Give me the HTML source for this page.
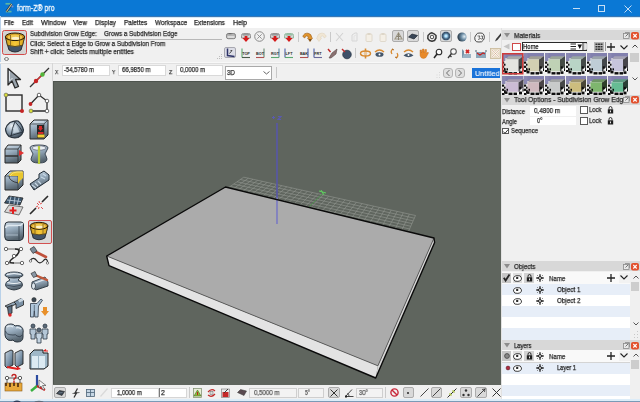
<!DOCTYPE html>
<html><head><meta charset="utf-8">
<style>
*{margin:0;padding:0;box-sizing:border-box}
html,body{width:640px;height:402px;overflow:hidden;background:#f0f0f0;font-family:"Liberation Sans",sans-serif;color:#000}
.a{position:absolute}
svg{position:absolute;overflow:visible}
.t{position:absolute;white-space:nowrap;line-height:0;transform-origin:0 0;color:#1a1a1a;-webkit-text-stroke:0.25px currentColor;will-change:transform}
</style></head><body>
<div class="a" style="left:0px;top:0px;width:640px;height:16px;background:#0a78d5"></div>
<div class="t" style="left:17.00px;top:7.85px;font-size:8.8px;transform:scaleX(0.789);color:#eef6fd;-webkit-text-stroke:0.35px #eef6fd">form-Z® pro</div>
<div class="a" style="left:0px;top:16px;width:640px;height:1px;background:#3a78b4"></div>
<svg style="left:4px;top:2px" width="11" height="12" viewBox="0 0 11 12"><path d="M1.5 1.8L7 1.8" stroke="#5cb4a4" stroke-width="1.7"/><path d="M1.8 9.6L7.5 9.6" stroke="#5cb4a4" stroke-width="1.7"/><path d="M2.5 9.5L7.8 2" stroke="#1a3050" stroke-width="2.2"/><path d="M2.5 9.5L7.8 2" stroke="#d0c890" stroke-width="1.1"/><circle cx="8.5" cy="4.5" r="1" fill="#8a90c8"/></svg>
<div class="a" style="left:573px;top:8px;width:7px;height:1px;background:#c6def4"></div>
<div class="a" style="left:598px;top:5px;width:7px;height:7px;border:1px solid #c6def4"></div>
<svg style="left:623.5px;top:4.5px" width="8" height="8" viewBox="0 0 8 8"><path d="M0.5 0.5L7.5 7.5M7.5 0.5L0.5 7.5" stroke="#d6e8f8" stroke-width="0.9"/></svg>
<div class="a" style="left:0px;top:17px;width:640px;height:11px;background:#ffffff"></div>
<div class="a" style="left:0px;top:17px;width:640px;height:1px;background:#d2e8f8"></div>
<div class="t" style="left:4.00px;top:22.67px;font-size:7.3px;transform:scaleX(0.850);color:#1e1e1e">File</div>
<div class="t" style="left:22.00px;top:22.67px;font-size:7.3px;transform:scaleX(0.874);color:#1e1e1e">Edit</div>
<div class="t" style="left:41.00px;top:22.67px;font-size:7.3px;transform:scaleX(0.963);color:#1e1e1e">Window</div>
<div class="t" style="left:73.00px;top:22.67px;font-size:7.3px;transform:scaleX(0.892);color:#1e1e1e">View</div>
<div class="t" style="left:95.00px;top:22.67px;font-size:7.3px;transform:scaleX(0.877);color:#1e1e1e">Display</div>
<div class="t" style="left:123.60px;top:22.67px;font-size:7.3px;transform:scaleX(0.880);color:#1e1e1e">Palettes</div>
<div class="t" style="left:154.50px;top:22.67px;font-size:7.3px;transform:scaleX(0.888);color:#1e1e1e">Workspace</div>
<div class="t" style="left:194.30px;top:22.67px;font-size:7.3px;transform:scaleX(0.865);color:#1e1e1e">Extensions</div>
<div class="t" style="left:233.00px;top:22.67px;font-size:7.3px;transform:scaleX(0.932);color:#1e1e1e">Help</div>
<div class="a" style="left:0px;top:16px;width:1px;height:384px;background:#b9d1e9"></div>
<div class="a" style="left:30px;top:39px;width:192px;height:1px;background:#b8b8b8"></div>
<div class="t" style="left:30.00px;top:33.81px;font-size:7.2px;transform:scaleX(0.872);color:#262626">Subdivision Grow Edge:</div>
<div class="t" style="left:104.40px;top:33.81px;font-size:7.2px;transform:scaleX(0.872);color:#262626">Grows a Subdivision Edge</div>
<div class="t" style="left:30.00px;top:44.01px;font-size:7.2px;transform:scaleX(0.873);color:#262626">Click: Select a Edge to Grow a Subdivision From</div>
<div class="t" style="left:30.00px;top:52.01px;font-size:7.2px;transform:scaleX(0.898);color:#262626">Shift + click: Selects multiple entities</div>
<div class="a" style="left:1.7px;top:30.1px;width:25.8px;height:25.4px;background:#d4d4d4;border:1.3px solid #d24a4a;border-radius:2.5px"></div>
<svg style="left:4px;top:32px" width="22" height="22" viewBox="0 0 22 22"><path d="M1.5 5L20.5 5L18.5 13L17 18Q11 22 5 18L3.5 13Z" fill="#445468" stroke="#1e2228" stroke-width="0.9"/><path d="M1.5 5L20.5 5L18.6 13.2Q11 15.8 3.4 13.2Z" fill="url(#gy)" stroke="#3a2a10" stroke-width="0.7"/><ellipse cx="11" cy="4.8" rx="9.6" ry="3.8" fill="#c99420" stroke="#241a08" stroke-width="1"/><ellipse cx="11" cy="5.3" rx="7.4" ry="2.7" fill="#f0c850"/><ellipse cx="11.5" cy="6.2" rx="4" ry="1.5" fill="#fbf0cc"/><path d="M6.5 3L6.5 13.5M15.5 3L15.5 13.5" stroke="#6a5020" stroke-width="0.7"/></svg>
<svg style="left:3.5px;top:56.5px" width="5" height="4" viewBox="0 0 5 4"><ellipse cx="2.5" cy="2" rx="2" ry="1.4" fill="#fff" stroke="#666" stroke-width="0.9"/></svg>
<svg style="left:217px;top:54px" width="6" height="6" viewBox="0 0 6 6"><g fill="#bdbdbd"><rect x="4" y="0" width="1" height="1"/><rect x="4" y="2" width="1" height="1"/><rect x="4" y="4" width="1" height="1"/><rect x="2" y="2" width="1" height="1"/><rect x="2" y="4" width="1" height="1"/><rect x="0" y="4" width="1" height="1"/></g></svg>
<svg style="left:226.2px;top:32.8px" width="10" height="6" viewBox="0 0 10 6"><rect x="0.5" y="0.5" width="9" height="5.2" rx="1.8" fill="#b4b4b4" stroke="#7a7a7a" stroke-width="0.9"/><rect x="1.5" y="3" width="7" height="2" fill="#dcdcdc"/><rect x="2.5" y="0" width="3" height="1.2" fill="#6a6a6a"/></svg>
<svg style="left:240.5px;top:32.5px" width="10" height="9" viewBox="0 0 10 9"><path d="M0.5 5L0.5 2.5Q0.5 0.5 2.5 0.5L7.5 0.5Q9.5 0.5 9.5 2.5L9.5 5Z" fill="#d8d8d8" stroke="#8a8a8a" stroke-width="0.9"/><rect x="1.5" y="1.2" width="7" height="1.3" fill="#8a8a8a"/><path d="M3.6 3L6.4 3L6.4 5L8.6 5L5 9L1.4 5L3.6 5Z" fill="#d41a1a"/></svg>
<svg style="left:254.0px;top:31.0px" width="11" height="11" viewBox="0 0 11 11"><circle cx="5.5" cy="5.5" r="4.8" fill="none" stroke="#8a8a8a" stroke-width="1"/><path d="M3.3 3.3L7.7 7.7M7.7 3.3L3.3 7.7" stroke="#8a8a8a" stroke-width="0.9"/></svg>
<svg style="left:269.5px;top:32.5px" width="10" height="9" viewBox="0 0 10 9"><path d="M0.5 5L0.5 2.5Q0.5 0.5 2.5 0.5L7.5 0.5Q9.5 0.5 9.5 2.5L9.5 5Z" fill="#d8d8d8" stroke="#8a8a8a" stroke-width="0.9"/><rect x="1.5" y="1.2" width="7" height="1.3" fill="#8a8a8a"/><path d="M3.6 3L6.4 3L6.4 5L8.6 5L5 9L1.4 5L3.6 5Z" fill="#d41a1a"/></svg>
<svg style="left:283.5px;top:32.5px" width="10" height="9" viewBox="0 0 10 9"><path d="M0.5 5L0.5 2.5Q0.5 0.5 2.5 0.5L7.5 0.5Q9.5 0.5 9.5 2.5L9.5 5Z" fill="#d8d8d8" stroke="#8ab89a" stroke-width="0.9"/><rect x="1.5" y="1.2" width="7" height="1.3" fill="#8ab89a"/><path d="M3.6 3L6.4 3L6.4 5L8.6 5L5 9L1.4 5L3.6 5Z" fill="#d41a1a"/></svg>
<div class="a" style="left:298px;top:32px;width:1px;height:10px;background:#c9c9c9"></div>
<svg style="left:302.0px;top:32.0px" width="11" height="10" viewBox="0 0 11 10"><path d="M0.8 4.5Q2 0.8 6 1.2Q9.5 1.8 9.8 5.5L10.5 6L8 9.5L5.5 6L6.5 5.5Q6.2 3.8 4.5 4Q3 4.3 2.8 6Z" fill="#e0942c" stroke="#9a5a18" stroke-width="0.6"/><path d="M7 7L8 9.5L9.5 7.5" fill="#5a3a18"/></svg>
<svg style="left:316.0px;top:32.0px" width="11" height="10" viewBox="0 0 11 10"><path d="M10.2 4.5Q9 0.8 5 1.2Q1.5 1.8 1.2 5.5L0.5 6L3 9.5L5.5 6L4.5 5.5Q4.8 3.8 6.5 4Q8 4.3 8.2 6Z" fill="#f0e6d4" stroke="#e0d4bc" stroke-width="0.6"/></svg>
<div class="a" style="left:330px;top:32px;width:1px;height:10px;background:#c9c9c9"></div>
<svg style="left:334.5px;top:32.0px" width="9" height="10" viewBox="0 0 9 10"><path d="M1 1L8 9M8 1L1 9" stroke="#d2d2d2" stroke-width="1.1"/></svg>
<svg style="left:349.5px;top:32.0px" width="9" height="10" viewBox="0 0 9 10"><path d="M2 9L2 3L5 1L7 1L7 9Z" fill="none" stroke="#d6d6d6" stroke-width="1"/><path d="M4 9L4 4L6 3" fill="none" stroke="#dedede" stroke-width="0.8"/></svg>
<svg style="left:365.0px;top:32.0px" width="8" height="10" viewBox="0 0 8 10"><rect x="1" y="2" width="6" height="7.5" rx="1" fill="#f4efe6" stroke="#ddd6c8" stroke-width="0.9"/><rect x="2.5" y="1" width="3" height="2" fill="#ddd6c8"/></svg>
<svg style="left:379.0px;top:32.0px" width="8" height="10" viewBox="0 0 8 10"><rect x="1" y="2" width="6" height="7.5" rx="1" fill="#f4efe6" stroke="#ddd6c8" stroke-width="0.9"/><rect x="2.5" y="1" width="3" height="2" fill="#ddd6c8"/></svg>
<div class="a" style="left:392px;top:30px;width:12px;height:12px;background:#d9d9d9;border:1px solid #acacac;border-radius:2px"></div>
<div class="a" style="left:407px;top:30px;width:12px;height:12px;background:#d9d9d9;border:1px solid #acacac;border-radius:2px"></div>
<svg style="left:408.0px;top:32.5px" width="10" height="7" viewBox="0 0 10 7"><path d="M0.5 4L4 1L9.5 2.5L6 6Z" fill="#3a4656" stroke="#1e2630" stroke-width="0.7"/></svg>
<div class="a" style="left:423px;top:32px;width:1px;height:10px;background:#c9c9c9"></div>
<svg style="left:427.0px;top:32.0px" width="10" height="10" viewBox="0 0 10 10"><path d="M5 0.8L7 1.8L9 3.5L9 6L7.5 8.5L5 9.2L2.5 8.5L0.8 6.5L1 3.5L3 1.5Z" fill="#f4f4f4" stroke="#3a3a3a" stroke-width="1.5" stroke-linejoin="round"/><circle cx="5" cy="5" r="1.8" fill="none" stroke="#4a4a4a" stroke-width="1"/></svg>
<svg style="left:393.5px;top:31.5px" width="9" height="9" viewBox="0 0 9 9"><path d="M1 7L4.5 1L8 7Z" fill="none" stroke="#a09a88" stroke-width="1.2"/><path d="M2.5 4.5L6.5 4.5M4.5 1L4.5 8" stroke="#8a8474" stroke-width="1"/></svg>
<div class="a" style="left:440px;top:30px;width:12px;height:12px;background:#d9d9d9;border:1px solid #acacac;border-radius:2px"></div>
<svg width="0" height="0" style="position:absolute"><defs><radialGradient id="gl" cx="0.5" cy="0.5" r="0.5"><stop offset="0" stop-color="#f0faff"/><stop offset="0.3" stop-color="#9ad0f0"/><stop offset="0.6" stop-color="#4a6c88"/><stop offset="0.85" stop-color="#3a5068"/><stop offset="1" stop-color="#8aa4b8"/></radialGradient><radialGradient id="gsh" cx="0.75" cy="0.45" r="0.7"><stop offset="0" stop-color="#e0eef6"/><stop offset="0.5" stop-color="#6a8aa2"/><stop offset="1" stop-color="#2e3e4c"/></radialGradient></defs></svg>
<svg style="left:441.0px;top:31.0px" width="10" height="10" viewBox="0 0 10 10"><circle cx="5" cy="5" r="4.6" fill="url(#gl)"/></svg>
<svg style="left:456.5px;top:31.5px" width="10" height="10" viewBox="0 0 10 10"><circle cx="5" cy="5" r="4.6" fill="url(#gsh)"/></svg>
<div class="a" style="left:470px;top:32px;width:1px;height:10px;background:#c9c9c9"></div>
<svg style="left:473.5px;top:31.5px" width="11" height="11" viewBox="0 0 11 11"><path d="M2 3Q3 0.5 6 1Q9 0.5 10 3Q11 6 9.5 8Q8 10.5 5 10Q2 10.5 1 8Q0 5 2 3Z" fill="#f4f4f4" stroke="#4a4a4a" stroke-width="1"/><path d="M3.5 4L6 4L5 5.5L6.5 6.5L4 7.5M7 4L8.5 4L8.5 7L7 7" fill="none" stroke="#505050" stroke-width="0.8"/></svg>
<div class="a" style="left:489px;top:32px;width:1px;height:10px;background:#c9c9c9"></div>
<svg style="left:494.0px;top:32.0px" width="8" height="10" viewBox="0 0 8 10"><path d="M7 1L2 7L1 9.5L3.5 8L8 2.5Z" fill="#3a3a3a"/></svg>
<div class="a" style="left:224px;top:47px;width:12px;height:11px;background:#dcdde6;border:1px solid #a8a8b0;border-radius:2px"></div>
<svg style="left:225.5px;top:48.0px" width="9" height="9" viewBox="0 0 9 9"><path d="M1.5 0.5L1.5 7.5L8.5 8.5" fill="none" stroke="#2e3468" stroke-width="1.5"/><path d="M3.5 5.5L6 2.5M4.5 2.5L6 2.5" stroke="#3a3a3a" stroke-width="0.9"/></svg>
<svg style="left:240.5px;top:48.0px" width="10" height="10" viewBox="0 0 10 10"><path d="M1 0.5L1 9.5" stroke="#5aa870" stroke-width="1.1"/><path d="M1 9.5L9 9.5" stroke="#4a5a4a" stroke-width="1.1"/><text x="5" y="6.3" font-size="3.8" font-family="Liberation Sans" font-weight="bold" text-anchor="middle" fill="#2a2a2a" transform="scale(1,1.1)">TOP</text></svg>
<svg style="left:255.0px;top:48.0px" width="10" height="10" viewBox="0 0 10 10"><path d="M9 0.5L9 9.5" stroke="#6a8a70" stroke-width="1.1"/><path d="M1 9.5L9 9.5" stroke="#b05050" stroke-width="1.1"/><text x="5" y="6.3" font-size="3.8" font-family="Liberation Sans" font-weight="bold" text-anchor="middle" fill="#2a2a2a" transform="scale(1,1.1)">BOT</text></svg>
<svg style="left:269.5px;top:48.0px" width="10" height="10" viewBox="0 0 10 10"><path d="M9 0.5L9 9.5" stroke="#5a8aa0" stroke-width="1.1"/><path d="M1 9.5L9 9.5" stroke="#5aa870" stroke-width="1.1"/><text x="5" y="6.3" font-size="3.8" font-family="Liberation Sans" font-weight="bold" text-anchor="middle" fill="#2a2a2a" transform="scale(1,1.1)">RGT</text></svg>
<svg style="left:284.0px;top:48.0px" width="10" height="10" viewBox="0 0 10 10"><path d="M1 0.5L1 9.5" stroke="#4a5ea8" stroke-width="1.1"/><path d="M1 9.5L9 9.5" stroke="#5aa870" stroke-width="1.1"/><text x="5" y="6.3" font-size="3.8" font-family="Liberation Sans" font-weight="bold" text-anchor="middle" fill="#2a2a2a" transform="scale(1,1.1)">LFT</text></svg>
<svg style="left:298.5px;top:48.0px" width="10" height="10" viewBox="0 0 10 10"><path d="M9 0.5L9 9.5" stroke="#4a5ea8" stroke-width="1.1"/><path d="M1 9.5L9 9.5" stroke="#b05050" stroke-width="1.1"/><text x="5" y="6.3" font-size="3.8" font-family="Liberation Sans" font-weight="bold" text-anchor="middle" fill="#2a2a2a" transform="scale(1,1.1)">BAK</text></svg>
<svg style="left:313.0px;top:48.0px" width="10" height="10" viewBox="0 0 10 10"><path d="M1 0.5L1 9.5" stroke="#4a5ea8" stroke-width="1.1"/><path d="M1 9.5L9 9.5" stroke="#6a6a9a" stroke-width="1.1"/><text x="5" y="6.3" font-size="3.8" font-family="Liberation Sans" font-weight="bold" text-anchor="middle" fill="#2a2a2a" transform="scale(1,1.1)">FRT</text></svg>
<svg style="left:327.0px;top:47.5px" width="11" height="11" viewBox="0 0 11 11"><path d="M2 10L5 5L10 1L9 6L4 10Z" fill="#8a7070" stroke="#5a4a4a" stroke-width="0.6"/><path d="M1 1L3.5 4" stroke="#c02a2a" stroke-width="1.4"/></svg>
<svg style="left:341.0px;top:47.5px" width="11" height="11" viewBox="0 0 11 11"><circle cx="6" cy="6.5" r="4.3" fill="#3e5068" stroke="#243040" stroke-width="0.7"/><path d="M1 1L4 4" stroke="#c02a2a" stroke-width="1.4"/></svg>
<div class="a" style="left:355px;top:48px;width:1px;height:10px;background:#c9c9c9"></div>
<svg style="left:360.0px;top:47.5px" width="11" height="11" viewBox="0 0 11 11"><ellipse cx="5.5" cy="5.5" rx="5" ry="2.5" fill="none" stroke="#d88a30" stroke-width="1.4"/><path d="M5.5 0.5L5.5 10.5" stroke="#d88a30" stroke-width="1.6"/><circle cx="5.5" cy="5.5" r="1.8" fill="#e8c8a0"/></svg>
<svg style="left:374.0px;top:47.5px" width="11" height="11" viewBox="0 0 11 11"><path d="M1 4Q5.5 0 10 4" fill="none" stroke="#d88a30" stroke-width="1.4"/><ellipse cx="5.5" cy="6.5" rx="4" ry="2.3" fill="#44566a"/><circle cx="5.5" cy="6.5" r="1" fill="#fff"/></svg>
<svg style="left:390.0px;top:47.5px" width="9" height="11" viewBox="0 0 9 11"><path d="M3 1Q0 3 2 6M6 10Q9 8 7 5" fill="none" stroke="#d88a30" stroke-width="1.3"/><path d="M4 2L2 1M5 9L7 10" stroke="#a86a2a" stroke-width="1"/></svg>
<svg style="left:402.5px;top:47.5px" width="11" height="11" viewBox="0 0 11 11"><path d="M1 4Q5.5 0 10 4" fill="none" stroke="#d88a30" stroke-width="1.4"/><path d="M0.5 7.5Q5.5 3 10.5 7.5Q5.5 11 0.5 7.5Z" fill="#44566a"/><circle cx="5.5" cy="7" r="1" fill="#fff"/></svg>
<svg style="left:417.5px;top:47.5px" width="11" height="11" viewBox="0 0 11 11"><path d="M2 5L2 2L3.5 2L3.5 5L4.5 1L6 1L6 5L7 1.5L8.5 1.5L8.5 5.5L10 4L10.5 5L8 9.5Q6 11 3.5 10Q1.5 8.5 2 5Z" fill="#e88a2a" stroke="#c06a1a" stroke-width="0.4"/></svg>
<svg style="left:432.5px;top:47.5px" width="10" height="11" viewBox="0 0 10 11"><circle cx="6" cy="4" r="2.8" fill="#fafafa" stroke="#2a2a2a" stroke-width="1.1"/><path d="M4 6L1 10" stroke="#2a2a2a" stroke-width="1.5"/></svg>
<svg style="left:446.5px;top:47.5px" width="10" height="11" viewBox="0 0 10 11"><circle cx="6.5" cy="3.5" r="2.8" fill="#fafafa" stroke="#555" stroke-width="1.1"/><path d="M4.5 5.5L1 10M3 7.5L4.5 9" stroke="#3a3a3a" stroke-width="1.3"/></svg>
<svg style="left:460.5px;top:47.5px" width="11" height="11" viewBox="0 0 11 11"><path d="M1 10L1 1L3 3L3 6L7 6L10 10Z" fill="#7894a8"/><path d="M1 10L10 10L10 6L3 6" fill="#9ab2c4"/><path d="M5 2L8 5M8 2L5 5" stroke="#d02a2a" stroke-width="1.8"/></svg>
<svg style="left:474.5px;top:47.5px" width="12" height="11" viewBox="0 0 12 11"><path d="M1 4L11 4L11 10L1 10Z" fill="#8aa6ba"/><path d="M2 5L5 7L8 5L10 6" fill="none" stroke="#c42020" stroke-width="1.2"/><path d="M1 4L1 2M11 4L11 2" stroke="#4a6070" stroke-width="1"/></svg>
<svg style="left:489.5px;top:47.5px" width="11" height="11" viewBox="0 0 11 11"><rect x="0.5" y="0.5" width="10" height="10" fill="#e8dcc8" stroke="#c8b898" stroke-width="0.8"/><path d="M2 2L9 9M9 2L2 9" stroke="#fff" stroke-width="1.6"/><path d="M2 2L9 9M9 2L2 9" stroke="#d0a080" stroke-width="0.6"/></svg>
<div class="a" style="left:0px;top:63px;width:500px;height:1px;background:#e0e0e0"></div>
<div class="a" style="left:0px;top:62px;width:500px;height:1px;background:#f8f8f8"></div>
<div class="a" style="left:52px;top:63px;width:1px;height:337px;background:#d6d6d6"></div>
<svg width="0" height="0" style="position:absolute"><defs>
<linearGradient id="gm" x1="0" y1="0" x2="0.3" y2="1"><stop offset="0" stop-color="#d0dce6"/><stop offset="0.45" stop-color="#98acbe"/><stop offset="1" stop-color="#56646f"/></linearGradient>
<linearGradient id="gm2" x1="0" y1="0" x2="1" y2="1"><stop offset="0" stop-color="#c9d6e2"/><stop offset="0.6" stop-color="#7890a6"/><stop offset="1" stop-color="#44535f"/></linearGradient>
<radialGradient id="gs" cx="0.35" cy="0.3" r="0.75"><stop offset="0" stop-color="#eef4f8"/><stop offset="0.45" stop-color="#9aacbc"/><stop offset="1" stop-color="#3c4a58"/></radialGradient>
<linearGradient id="gy" x1="0" y1="0" x2="1" y2="0"><stop offset="0" stop-color="#c99a1a"/><stop offset="0.5" stop-color="#f7c83a"/><stop offset="1" stop-color="#d9a520"/></linearGradient>
</defs></svg>
<svg style="left:4px;top:67.5px" width="20" height="20" viewBox="0 0 20 20"><path d="M4 0.5L4 17L8 13L11 20L14.5 18.5L11.5 11.5L16.5 11.5Z" fill="#9aa4ad" stroke="#2a2a2a" stroke-width="1.3" stroke-linejoin="round"/><path d="M5.5 3L5.5 13L8.5 10" fill="none" stroke="#dfe5ea" stroke-width="1"/></svg>
<svg style="left:29px;top:67.5px" width="20" height="20" viewBox="0 0 20 20"><path d="M1 19L20 0" stroke="#333" stroke-width="1.3"/><path d="M5 15L15 5" stroke="#d23030" stroke-width="1.3"/><circle cx="7" cy="13" r="2.2" fill="#c42424"/><circle cx="13.5" cy="6.5" r="2.2" fill="#52b43a"/></svg>
<svg style="left:4px;top:92.5px" width="20" height="20" viewBox="0 0 20 20"><rect x="2" y="2" width="16" height="16" fill="none" stroke="#2b2b2b" stroke-width="1.4"/><circle cx="2" cy="2" r="1.9" fill="#d8dc3a" stroke="#555" stroke-width="0.6"/><circle cx="18" cy="18" r="2" fill="#c42424"/></svg>
<svg style="left:29px;top:92.5px" width="20" height="20" viewBox="0 0 20 20"><path d="M1.5 11L10 2L18 8L18 18L2 18" fill="none" stroke="#2b2b2b" stroke-width="1.3"/><circle cx="1.5" cy="11" r="1.9" fill="#c42424"/><circle cx="10" cy="2" r="1.8" fill="#fff" stroke="#444" stroke-width="0.8"/><circle cx="18" cy="8" r="1.8" fill="#fff" stroke="#444" stroke-width="0.8"/><circle cx="18" cy="18" r="1.8" fill="#fff" stroke="#444" stroke-width="0.8"/><circle cx="2" cy="18" r="1.9" fill="#d8dc3a" stroke="#555" stroke-width="0.6"/></svg>
<svg style="left:4px;top:118.5px" width="20" height="20" viewBox="0 0 20 20"><path d="M6 3.5Q10 1.5 14 2Q18 5 19.5 11Q19 16 14 18.5Q9 19.5 5 17.5Q1.5 14 1.5 10Q2.5 6 6 3.5Z" fill="url(#gs)" stroke="#26303a" stroke-width="1.1"/><path d="M11 2.5Q8 9 7 17.5M11 2.5Q16 8 19 13.5M5.5 17Q12 15 19 13" fill="none" stroke="#26303a" stroke-width="0.9"/><path d="M11.5 5Q14 9 15.5 13Q11 14 9 14Q10 9 11.5 5Z" fill="#d6e2ec" opacity="0.7"/></svg>
<svg style="left:29px;top:118.5px" width="20" height="20" viewBox="0 0 20 20"><path d="M1 5L5 1L19 1L19 16L15 20L1 20Z" fill="url(#gm)" stroke="#2a2a2a" stroke-width="1"/><path d="M1 5L15 5L19 1M15 5L15 20" fill="none" stroke="#3a3a3a" stroke-width="0.7"/><path d="M5 3L15 3" stroke="#e0e8f0" stroke-width="1"/><rect x="8" y="6" width="7" height="13" fill="#262626"/><path d="M10 7L13 7L13 9L14 9L11.5 12L9 9L10 9Z" fill="#d42a2a"/><rect x="9" y="13" width="5.5" height="2" fill="#d42a2a"/><rect x="8.5" y="15.5" width="7" height="3" fill="#f2d03a"/></svg>
<svg style="left:4px;top:144px" width="20" height="20" viewBox="0 0 20 20"><path d="M1 5L4 1L17 1L17 16L14 19L1 19Z" fill="url(#gm)" stroke="#2a2a2a" stroke-width="1"/><path d="M1 5L14 5L17 1M14 5L14 19" fill="none" stroke="#2a2a2a" stroke-width="0.8"/><path d="M1 12L14 12" stroke="#333" stroke-width="1.5"/><path d="M15 6L20 9L15 12Z" fill="#e03030"/></svg>
<svg style="left:29px;top:144px" width="20" height="20" viewBox="0 0 20 20"><path d="M1 4Q1 1 10 1Q19 1 19 4L17 8Q15 10 17 12L18 15Q18 19 10 19Q2 19 2 15L3 12Q5 10 3 8Z" fill="url(#gm)" stroke="#2e3a46" stroke-width="0.9"/><ellipse cx="10" cy="4" rx="7" ry="2.2" fill="#e8eef4" stroke="#556" stroke-width="0.6"/><path d="M10 2L10 20" stroke="#b8cc3a" stroke-width="2.2"/></svg>
<svg style="left:4px;top:169.5px" width="20" height="20" viewBox="0 0 20 20"><path d="M1 6L6 1L19 1L19 15L14 20L1 20Z" fill="url(#gm)" stroke="#2a2a2a" stroke-width="1"/><path d="M1 6L14 6L19 1M14 6L14 20" fill="none" stroke="#2e3640" stroke-width="0.7"/><path d="M5 6Q6 1.5 11 1.5L19 1.5L19 8Q15 11 14 14L14 6Z" fill="#e8c62e"/><path d="M6 6Q8 2 13 2L18.5 2" fill="none" stroke="#f6e27a" stroke-width="1"/><path d="M5 6Q5 11 14 13" fill="none" stroke="#2a2a2a" stroke-width="0.8"/></svg>
<svg style="left:29px;top:169.5px" width="20" height="20" viewBox="0 0 20 20"><path d="M1 14L10 8L10 4L15 1L20 5L20 10L5 20Z" fill="url(#gm)" stroke="#1f2a35" stroke-width="1"/><path d="M3 15L7 18M6 13L9 16M9 11L12 14M12 7L16 9M14 4L17 6" stroke="#c8d8e6" stroke-width="1.2"/></svg>
<svg style="left:4px;top:194.6px" width="20" height="20" viewBox="0 0 20 20"><path d="M0.5 17L5 10L19 12L15 20Z" fill="#d6d6d6" stroke="#555" stroke-width="0.8"/><path d="M9 12L9 19M5.5 15.5L12.5 15.5" stroke="#e02020" stroke-width="2"/><path d="M0.5 8L5 1L19 3L16 10Z" fill="#3c566e" stroke="#222" stroke-width="0.8"/><path d="M3 5L17 6.5M7 1.5L5 9M11 2L10 9.5M15 2.5L13 10" stroke="#b9cad8" stroke-width="0.9"/></svg>
<svg style="left:29px;top:194.6px" width="20" height="20" viewBox="0 0 20 20"><path d="M1 19L7 13M13 7L19 1" stroke="#2a2a2a" stroke-width="1.6"/><path d="M8 8L10 10M12 12L14 14M7 12L9 11M11 9L13 8M10 6L10.5 8M9.5 14L10 12" stroke="#e04040" stroke-width="0.9"/></svg>
<svg style="left:4px;top:220.8px" width="20" height="20" viewBox="0 0 20 20"><path d="M4 1L17 1Q19.5 1 19.5 4L19.5 15Q19.5 19 16 19.5L4 19.5Q1 19.5 0.8 16L0.8 5Q0.8 1 4 1Z" fill="url(#gm)" stroke="#262e36" stroke-width="1"/><path d="M1.5 7Q2 4.5 5 4.5L15 4.5Q18 4.5 18.5 2" fill="none" stroke="#dfe8f0" stroke-width="1.3"/><path d="M15 5L15 19" stroke="#34404c" stroke-width="0.8"/><path d="M2 14L14 14" stroke="#b8c8d6" stroke-width="0.8"/></svg>
<div class="a" style="left:27.5px;top:219.5px;width:24px;height:24px;background:#d9d9d9;border:1px solid #d35050;border-radius:2px"></div>
<svg style="left:29px;top:220.8px" width="20" height="20" viewBox="0 0 20 20"><path d="M1.2 5L18.8 5L17 12.5L15.8 17Q10 20.5 4.2 17L3 12.5Z" fill="#445468" stroke="#1e2228" stroke-width="0.9"/><path d="M1.2 5L18.8 5L17.1 12.7Q10 15 2.9 12.7Z" fill="url(#gy)" stroke="#3a2a10" stroke-width="0.7"/><ellipse cx="10" cy="4.8" rx="8.9" ry="3.5" fill="#c99420" stroke="#241a08" stroke-width="1"/><ellipse cx="10" cy="5.3" rx="6.8" ry="2.5" fill="#f0c850"/><ellipse cx="10.5" cy="6.1" rx="3.6" ry="1.4" fill="#fbf0cc"/><path d="M6 3L6 13M14 3L14 13" stroke="#6a5020" stroke-width="0.7"/></svg>
<svg style="left:4px;top:246px" width="20" height="20" viewBox="0 0 20 20"><path d="M2 3L17 3M3 17L18 17" stroke="#444" stroke-width="0.8"/><path d="M11 3Q18 3 13 9Q10 11 8 13Q3 17 10 17" fill="none" stroke="#262626" stroke-width="1.6"/><circle cx="2" cy="3" r="1.7" fill="#fff" stroke="#444" stroke-width="0.8"/><circle cx="17" cy="3" r="1.7" fill="#fff" stroke="#444" stroke-width="0.8"/><circle cx="10" cy="10" r="1.7" fill="#fff" stroke="#444" stroke-width="0.8"/><circle cx="3" cy="17" r="1.7" fill="#fff" stroke="#444" stroke-width="0.8"/><circle cx="18" cy="17" r="1.7" fill="#fff" stroke="#444" stroke-width="0.8"/></svg>
<svg style="left:29px;top:246px" width="20" height="20" viewBox="0 0 20 20"><path d="M5 5L17 11" stroke="#c0503a" stroke-width="2.6" stroke-linecap="round"/><path d="M1 3L5 0.5L8 5L4 7.5Z" fill="#7a8a98" stroke="#333" stroke-width="0.7"/><path d="M1 15C3 11 6 12 8 15C10 18 13 17 15 14C17 12 19 14 18.5 17" fill="none" stroke="#262626" stroke-width="1.2"/><circle cx="1.5" cy="15" r="1.2" fill="#fff" stroke="#333" stroke-width="0.6"/><circle cx="18.5" cy="17" r="1.2" fill="#fff" stroke="#333" stroke-width="0.6"/></svg>
<svg style="left:4px;top:271.4px" width="20" height="20" viewBox="0 0 20 20"><path d="M5 6Q4 8 6 9Q1 11 1.5 14Q2 18 10 19Q18 18 18.5 14Q19 11 14 9Q16 8 15 6Z" fill="url(#gm)" stroke="#28323c" stroke-width="0.9"/><path d="M2 14Q10 17 18 14" fill="none" stroke="#2e3a46" stroke-width="0.7"/><path d="M3.5 11.5Q10 13.5 16.5 11.5" fill="none" stroke="#eef3f7" stroke-width="1.1"/><ellipse cx="10" cy="4" rx="9" ry="3" fill="url(#gm)" stroke="#28323c" stroke-width="0.9"/><path d="M3 3.5Q10 1.5 17 3.5" fill="none" stroke="#eef3f7" stroke-width="1"/></svg>
<svg style="left:29px;top:271.4px" width="20" height="20" viewBox="0 0 20 20"><path d="M3 11L16 6L19 11L19 15L7 19L3 16Z" fill="url(#gm)" stroke="#2a3540" stroke-width="0.9"/><ellipse cx="4.5" cy="15" rx="2" ry="3.2" fill="#dfe8ef" stroke="#2a3540" stroke-width="0.8"/><path d="M6 12L17 8" stroke="#e8eef3" stroke-width="1.1"/><path d="M6 4L18 9" stroke="#c0583a" stroke-width="2.4" stroke-linecap="round"/><path d="M2 2.5L6 0.5L8 5L4.5 6.5Z" fill="#8a98a6" stroke="#333" stroke-width="0.7"/></svg>
<svg style="left:4px;top:297px" width="20" height="20" viewBox="0 0 20 20"><path d="M1 9L10 5L12 7L4 11Z" fill="url(#gm)" stroke="#222" stroke-width="0.8"/><path d="M10 5L17 1.5L19.5 3.5L19.5 8L12 11.5L12 7Z" fill="#7a90a4" stroke="#222" stroke-width="0.8"/><path d="M14 3L18 1L19.5 3.5L15.5 5.5Z" fill="#c8d6e2"/><path d="M3.5 10L8 8.5L8 16L4.5 17.5Z" fill="#5e7286" stroke="#222" stroke-width="0.8"/><circle cx="6" cy="18" r="1.7" fill="#e02828"/></svg>
<svg style="left:29px;top:297px" width="20" height="20" viewBox="0 0 20 20"><circle cx="5" cy="2.8" r="2.2" fill="#3a4650" stroke="#222" stroke-width="0.5"/><path d="M1.5 6.5L8 6.5L12 2L13.5 3.2L9.5 9L9 20L5.8 20L5.3 13.5L4.7 20L1.5 20Z" fill="#b0c6da" stroke="#2e3a48" stroke-width="0.8"/><path d="M5.3 8L5.3 13" stroke="#2e3a48" stroke-width="0.6"/><path d="M14 10L18 10L18 14L20 14L16 19L12 14L14 14Z" fill="#e8902a"/></svg>
<svg style="left:4px;top:322.7px" width="20" height="20" viewBox="0 0 20 20"><path d="M1 6Q1 1 7 1Q10 1 11 3Q13 2 16 3Q20 5 19 10L19 14Q19 19 13 19Q10 19 9 17Q7 18 4 17Q1 15 1 12Z" fill="url(#gm)" stroke="#28323c" stroke-width="1"/><path d="M1.5 8Q2 12 9 12Q12 11 13 13Q16 15 18.5 12" fill="none" stroke="#2e3a46" stroke-width="0.8"/><path d="M3 4Q6 2 9 4M12 5Q15 4 17 6" fill="none" stroke="#e4ecf2" stroke-width="1.2"/></svg>
<svg style="left:29px;top:322.7px" width="20" height="20" viewBox="0 0 20 20"><g stroke="#2e3a46" stroke-width="0.8"><circle cx="4" cy="3" r="2" fill="#5a6a78"/><circle cx="16" cy="3" r="2" fill="#5a6a78"/><path d="M1 6L7 6L7 11L6 11L6 16L2 16L2 11L1 11Z" fill="#b4c6d6"/><path d="M13 6L19 6L19 11L18 11L18 16L14 16L14 11L13 11Z" fill="#b4c6d6"/><circle cx="10" cy="7" r="2" fill="#5a6a78"/><path d="M7 10L13 10L13 15L12 15L12 20L8 20L8 15L7 15Z" fill="#c4d4e2"/></g></svg>
<svg style="left:4px;top:348.7px" width="20" height="20" viewBox="0 0 20 20"><path d="M1 4L7 1L9 2L9 16L3 19L1 17Z" fill="url(#gm2)" stroke="#222" stroke-width="0.9"/><path d="M11 4L17 1L19 2L19 15L13 18L11 16Z" fill="url(#gm2)" stroke="#222" stroke-width="0.9"/><path d="M3 18L14 20" stroke="#e02020" stroke-width="2"/><path d="M13 17L17 20L13 21Z" fill="#e02020"/></svg>
<svg style="left:29px;top:348.7px" width="20" height="20" viewBox="0 0 20 20"><path d="M1 5L5 1L14 1L14 4L19 4L19 17L15 20L1 20Z" fill="#9fb8c8" stroke="#1e1e1e" stroke-width="1"/><rect x="3" y="7" width="6" height="12" fill="#dceaf2"/><rect x="10" y="7" width="6" height="12" fill="#dceaf2"/><path d="M15 2L19 2M15 2L17 0.5" stroke="#e02020" stroke-width="1.2"/></svg>
<svg style="left:4px;top:373.6px" width="20" height="20" viewBox="0 0 20 20"><rect x="1" y="9" width="17" height="8" fill="#e8a83a" stroke="#8a5a1a" stroke-width="0.6"/><path d="M2 9L2 12M6 9L6 13M10 9L10 12M14 9L14 13" stroke="#4a2a10" stroke-width="1.6"/><circle cx="3" cy="4" r="1.7" fill="#fff" stroke="#333" stroke-width="0.8"/><circle cx="16" cy="4" r="1.7" fill="#fff" stroke="#333" stroke-width="0.8"/><path d="M3 6L3 9M16 6L16 9M5 4L14 4" stroke="#333" stroke-width="0.8"/><path d="M8 2.5Q8 0.5 10 0.5Q12 0.5 12 2.5Q12 4 10 5L10 6.5" fill="none" stroke="#c02020" stroke-width="1.4"/><circle cx="10" cy="8" r="0.9" fill="#c02020"/></svg>
<svg style="left:29px;top:373.6px" width="20" height="20" viewBox="0 0 20 20"><path d="M8 1L8 12" stroke="#2a4aa0" stroke-width="2.2"/><path d="M8 12L2 17" stroke="#38b040" stroke-width="2.5"/><path d="M8 12L16 16" stroke="#d02020" stroke-width="2.2"/><path d="M10 6L10 14L12 12L14 16L15.5 15L13.5 11.5L17 11.5Z" fill="#f4f4f4" stroke="#555" stroke-width="0.7"/></svg>
<div class="t" style="left:54.70px;top:71.59px;font-size:5.8px;transform:scaleX(0.827);color:#444">X</div>
<div class="a" style="left:62px;top:65px;width:48px;height:11px;background:#fff;border:1px solid #d9d9d9"></div>
<div class="t" style="left:63.75px;top:70.47px;font-size:7px;transform:scaleX(0.847);color:#2a2a2a">-54,5780 m</div>
<div class="t" style="left:112.20px;top:71.59px;font-size:5.8px;transform:scaleX(0.827);color:#444">Y</div>
<div class="a" style="left:118px;top:65px;width:47.5px;height:11px;background:#fff;border:1px solid #d9d9d9"></div>
<div class="t" style="left:121.50px;top:70.47px;font-size:7px;transform:scaleX(0.862);color:#2a2a2a">66,9850 m</div>
<div class="t" style="left:168.60px;top:71.59px;font-size:5.8px;transform:scaleX(0.903);color:#444">Z</div>
<div class="a" style="left:175.5px;top:65px;width:47.5px;height:11px;background:#fff;border:1px solid #d9d9d9"></div>
<div class="t" style="left:180.30px;top:70.47px;font-size:7px;transform:scaleX(0.863);color:#2a2a2a">0,0000 m</div>
<div class="a" style="left:225px;top:66px;width:47px;height:14px;background:#fff;border:1px solid #a9a9a9"></div>
<div class="t" style="left:227.10px;top:73.37px;font-size:7px;transform:scaleX(0.860);color:#2a2a2a">3D</div>
<svg style="left:263px;top:71px" width="7" height="4" viewBox="0 0 7 4"><path d="M0.5 0.5L3.5 3L6.5 0.5" fill="none" stroke="#555" stroke-width="0.9"/></svg>
<div class="a" style="left:276px;top:67px;width:1px;height:11px;background:#c8c8c8"></div>
<div class="a" style="left:443px;top:68px;width:10px;height:10px;background:#e0e0e0;border:1px solid #b4b4b4;border-radius:3px"></div>
<svg style="left:445px;top:69px" width="6" height="8" viewBox="0 0 6 8"><path d="M4.5 1L1.5 4L4.5 7" fill="none" stroke="#6a6a6a" stroke-width="1"/></svg>
<div class="a" style="left:455px;top:68px;width:10px;height:10px;background:#e0e0e0;border:1px solid #b4b4b4;border-radius:3px"></div>
<svg style="left:436px;top:72px" width="5" height="6" viewBox="0 0 5 6"><g fill="#d8d8d8"><rect x="3" y="0" width="1" height="1"/><rect x="3" y="2.5" width="1" height="1"/><rect x="0.5" y="2.5" width="1" height="1"/><rect x="3" y="5" width="1" height="1"/><rect x="0.5" y="5" width="1" height="1"/></g></svg>
<svg style="left:457px;top:69px" width="6" height="8" viewBox="0 0 6 8"><path d="M1.5 1L4.5 4L1.5 7" fill="none" stroke="#6a6a6a" stroke-width="1"/></svg>
<div class="a" style="left:472px;top:68px;width:28px;height:10px;background:#1a73d9"></div>
<div class="t" style="left:474.50px;top:73.93px;font-size:8px;transform:scaleX(0.903);color:#fff;-webkit-text-stroke:0.1px #fff">Untitled</div>
<div class="a" style="left:53px;top:81px;width:448px;height:304px;background:#5f655e"></div>
<svg style="left:53px;top:81px;overflow:hidden" width="448" height="304" viewBox="0 0 448 304"><path d="M190.75,96.20L164.00,114.50M195.34,97.22L169.05,115.61M199.97,98.26L174.15,116.73M204.66,99.30L179.31,117.86M209.40,100.36L184.52,119.01M214.19,101.43L189.79,120.16M219.03,102.51L195.12,121.33M223.92,103.60L200.50,122.51M228.86,104.70L205.93,123.71M233.85,105.81L211.43,124.91M238.89,106.93L216.97,126.13M243.98,108.07L222.57,127.36M249.12,109.22L228.23,128.60M254.31,110.37L233.94,129.86M259.55,111.54L239.71,131.12M264.84,112.72L245.53,132.40M270.18,113.91L251.41,133.69M275.58,115.12L257.35,135.00M281.02,116.33L263.34,136.31M286.51,117.55L269.38,137.64M292.06,118.79L275.48,138.98M297.65,120.04L281.64,140.33M303.29,121.30L287.85,141.69M308.99,122.57L294.11,143.07M314.73,123.85L300.43,144.46M320.53,125.14L306.81,145.86M326.37,126.44L313.24,147.27M332.27,127.76L319.73,148.69M338.21,129.08L326.27,150.13M344.21,130.42L332.87,151.58M350.26,131.77L339.53,153.04M356.35,133.13L346.24,154.51M362.50,134.50L353.00,156.00M190.75,96.20L362.50,134.50M187.41,98.49L361.31,137.19M184.06,100.77L360.12,139.88M180.72,103.06L358.94,142.56M177.38,105.35L357.75,145.25M174.03,107.64L356.56,147.94M170.69,109.93L355.38,150.62M167.34,112.21L354.19,153.31M164.00,114.50L353.00,156.00" stroke="#90948e" stroke-width="0.65" fill="none"/><path d="M255.50,126.50L270.50,111.50" stroke="#48a048" stroke-width="0.8" stroke-opacity="0.85"/><path d="M266.00,110.00L273.00,112.00M268.00,109.00L271.00,114.00" stroke="#60d060" stroke-width="1"/><path d="M224.00,42.00L224.00,117.00" stroke="#5858a0" stroke-width="1.8"/><path d="M219.00,36.50L222.00,36.50M220.50,35.00L220.50,38.00M225.00,35.50L228.00,35.50L225.00,38.50L228.00,38.50" stroke="#5a5ab0" stroke-width="1.1" fill="none"/><polygon points="53.70,175.00 324.90,284.80 322.70,297.00 56.00,184.70" fill="#e3e3e3"/><polygon points="324.90,284.80 381.00,157.00 381.60,161.50 322.70,297.00" fill="#d8d8d8"/><polygon points="53.70,175.00 172.50,106.00 381.00,157.00 324.90,284.80" fill="#ababab"/><path d="M224.00,116.50L224.00,143.00" stroke="#7f7fc0" stroke-width="1.8"/><path d="M53.70,175.00L324.90,284.80L381.00,157.00" stroke="#4a4a4a" stroke-width="0.8" fill="none"/><path d="M56.00,184.70L53.70,175.00L172.50,106.00L381.00,157.00L381.60,161.50L322.70,297.00Z" stroke="#0a0a0a" stroke-width="1.4" fill="none" stroke-linejoin="round"/></svg>
<div class="a" style="left:53px;top:81px;width:448px;height:1px;background:#4e544e"></div>
<div class="a" style="left:53px;top:81px;width:1px;height:303px;background:#4e544e"></div>
<div class="a" style="left:53px;top:384.5px;width:448px;height:14.5px;background:#f0f0f0"></div>
<div class="a" style="left:54.4px;top:386.7px;width:12px;height:11.6px;background:#d9d9d9;border:1px solid #acacac;border-radius:2px"></div>
<svg style="left:56.0px;top:389.5px" width="9" height="6" viewBox="0 0 9 6"><path d="M0.5 3.5L3.5 0.5L8.5 1.5L6 5.5Z" fill="#3a4450" stroke="#222" stroke-width="0.6"/><path d="M2.5 3L6.5 2.5" stroke="#8898a8" stroke-width="0.6"/></svg>
<svg style="left:71.5px;top:387.5px" width="8" height="10" viewBox="0 0 8 10"><path d="M0.5 5.5L7.5 4.5" stroke="#444" stroke-width="0.8"/><path d="M5.5 0.5L3 5L4.5 5L2 9.5" fill="none" stroke="#333" stroke-width="1.3"/></svg>
<svg style="left:85.8px;top:388.5px" width="9" height="8" viewBox="0 0 9 8"><rect x="0.5" y="0.5" width="8" height="7" fill="#c6d6e4" stroke="#4e6478" stroke-width="0.8"/><path d="M4.5 0.5L4.5 7.5M0.5 3.5L8.5 3.5" stroke="#4e6478" stroke-width="0.8"/></svg>
<svg style="left:100.0px;top:388.0px" width="8" height="9" viewBox="0 0 8 9"><path d="M0.5 8.5L7.5 0.5" stroke="#d8d8d8" stroke-width="1.2"/></svg>
<div class="a" style="left:111.25px;top:387.6px;width:48px;height:10px;background:#fff;border:1px solid #d6d6d6"></div>
<div class="t" style="left:116.90px;top:392.51px;font-size:7.2px;transform:scaleX(0.826);color:#262626">1,0000 m</div>
<div class="a" style="left:158.75px;top:387.6px;width:28px;height:10px;background:#fff;border:1px solid #d6d6d6"></div>
<div class="a" style="left:159.4px;top:388px;width:1px;height:9px;background:#7a7a7a"></div>
<div class="t" style="left:161.00px;top:392.51px;font-size:7.2px;transform:scaleX(0.949);color:#262626">2</div>
<div class="a" style="left:189px;top:387px;width:1px;height:11px;background:#cacaca"></div>
<svg style="left:192.5px;top:387.5px" width="9" height="10" viewBox="0 0 9 10"><rect x="0.5" y="0.5" width="8" height="9" fill="#e8eed8" stroke="#7a8a6a" stroke-width="0.7"/><path d="M4.5 2L8 8L1 8Z" fill="#8ac040" stroke="#4a6a20" stroke-width="0.6"/><path d="M4.5 4L4.5 7" stroke="#c02020" stroke-width="1"/></svg>
<svg style="left:206.5px;top:387.5px" width="9" height="10" viewBox="0 0 9 10"><path d="M1 4Q4.5 0 8 3" fill="none" stroke="#c02828" stroke-width="1.2"/><path d="M8 6Q4.5 10 1 7" fill="none" stroke="#c02828" stroke-width="1.2"/><rect x="3" y="3.5" width="3" height="3" fill="#d8d8d8" stroke="#666" stroke-width="0.5"/></svg>
<svg style="left:220.5px;top:387.5px" width="9" height="10" viewBox="0 0 9 10"><rect x="0.5" y="1" width="8" height="8.5" fill="#e8e8e8" stroke="#777" stroke-width="0.6"/><rect x="1.5" y="4" width="6" height="5" fill="#c42828"/><path d="M3 5L7 1" stroke="#333" stroke-width="0.9"/></svg>
<svg style="left:236.5px;top:389.0px" width="10" height="7" viewBox="0 0 10 7"><path d="M0.5 3.5L3.5 0.5L9.5 2L7 6.5Z" fill="#5a4a50" stroke="#333" stroke-width="0.5"/></svg>
<div class="a" style="left:249.4px;top:387.6px;width:47.5px;height:10px;background:#f3f3f3;border:1px solid #cfcfcf"></div>
<div class="t" style="left:254.00px;top:392.51px;font-size:7.2px;transform:scaleX(0.849);color:#5a5a5a">0,5000 m</div>
<div class="a" style="left:297.5px;top:387.6px;width:26.5px;height:10px;background:#f3f3f3;border:1px solid #cfcfcf"></div>
<div class="t" style="left:305.00px;top:392.51px;font-size:7.2px;transform:scaleX(0.726);color:#5a5a5a">5°</div>
<div class="a" style="left:328px;top:386.5px;width:12px;height:11.5px;background:#d9d9d9;border:1px solid #acacac;border-radius:2px"></div>
<svg style="left:330.0px;top:388.5px" width="8" height="8" viewBox="0 0 8 8"><path d="M0.5 0.5L7.5 7.5M7.5 0.5L0.5 7.5" stroke="#333" stroke-width="1"/><circle cx="4" cy="4" r="1" fill="#333"/></svg>
<svg style="left:345.0px;top:388.0px" width="9" height="9" viewBox="0 0 9 9"><path d="M0.5 8.5L8.5 8.5M0.5 8.5L7 1.5" stroke="#333" stroke-width="0.9"/><path d="M4 8.5Q4 6 2.5 5" fill="none" stroke="#333" stroke-width="0.8"/><rect x="0" y="7.5" width="2" height="2" fill="#222"/></svg>
<div class="a" style="left:356.25px;top:387.6px;width:27px;height:10px;background:#f3f3f3;border:1px solid #cfcfcf"></div>
<div class="t" style="left:359.00px;top:392.51px;font-size:7.2px;transform:scaleX(0.827);color:#5a5a5a">30°</div>
<div class="a" style="left:385px;top:387px;width:1px;height:11px;background:#cacaca"></div>
<svg style="left:389.5px;top:388.0px" width="9" height="9" viewBox="0 0 9 9"><circle cx="4.5" cy="4.5" r="3.6" fill="none" stroke="#c8283a" stroke-width="1.4"/><path d="M2 2L7 7" stroke="#c8283a" stroke-width="1.4"/></svg>
<div class="a" style="left:402.5px;top:386.5px;width:11px;height:11.5px;background:#d9d9d9;border:1px solid #acacac;border-radius:2px"></div>
<svg style="left:406.0px;top:390.5px" width="4" height="4" viewBox="0 0 4 4"><circle cx="2" cy="2" r="1.1" fill="#333"/></svg>
<svg style="left:419.5px;top:388.0px" width="9" height="9" viewBox="0 0 9 9"><path d="M0.5 8.5L8.5 0.5" stroke="#333" stroke-width="0.9"/></svg>
<div class="a" style="left:430.6px;top:386.5px;width:11.5px;height:11.5px;background:#d9d9d9;border:1px solid #acacac;border-radius:2px"></div>
<svg style="left:431.8px;top:388.0px" width="9" height="9" viewBox="0 0 9 9"><path d="M0.5 8.5L8.5 0.5" stroke="#333" stroke-width="0.9"/></svg>
<svg style="left:446.5px;top:387.5px" width="10" height="10" viewBox="0 0 10 10"><path d="M0.5 9.5L9.5 0.5" stroke="#333" stroke-width="1"/><path d="M2.5 5.5L4.5 7.5M5.5 2.5L7.5 4.5" stroke="#a8c040" stroke-width="1.6"/></svg>
<div class="a" style="left:460px;top:386.5px;width:12px;height:11.5px;background:#d9d9d9;border:1px solid #acacac;border-radius:2px"></div>
<svg style="left:462.0px;top:388.5px" width="8" height="8" viewBox="0 0 8 8"><circle cx="4" cy="1.5" r="1.2" fill="#333"/><circle cx="1.5" cy="6" r="1.2" fill="#333"/><circle cx="6.5" cy="6" r="1.2" fill="#333"/></svg>
<div class="a" style="left:475px;top:386.5px;width:12px;height:11.5px;background:#d9d9d9;border:1px solid #acacac;border-radius:2px"></div>
<svg style="left:476.5px;top:388.0px" width="9" height="9" viewBox="0 0 9 9"><path d="M0.5 8.5L8.5 0.5" stroke="#333" stroke-width="0.9"/><path d="M5 1.5L8 1L7.5 4" fill="none" stroke="#333" stroke-width="0.8"/></svg>
<svg style="left:491.5px;top:388.0px" width="9" height="9" viewBox="0 0 9 9"><path d="M0.5 0.5L8.5 8.5M8.5 0.5L0.5 8.5" stroke="#333" stroke-width="1"/></svg>
<div class="a" style="left:501px;top:28px;width:139px;height:372px;background:#f0f0f0"></div>
<div class="a" style="left:501px;top:28px;width:1px;height:372px;background:#e2e2e2"></div>
<div class="a" style="left:502px;top:30px;width:138px;height:10px;background:#d8d8d8"></div>
<svg style="left:503.5px;top:33px" width="6" height="5" viewBox="0 0 6 5"><path d="M0 0L6 0L3 4.5Z" fill="#8c8c8c"/></svg>
<div class="t" style="left:513.75px;top:35.84px;font-size:7.4px;transform:scaleX(0.876);color:#262626">Materials</div>
<svg style="left:622.5px;top:31.5px" width="7" height="7" viewBox="0 0 7 7"><rect x="0.5" y="1.5" width="5.5" height="5" fill="#e8e8e8" stroke="#8a8a8a" stroke-width="0.8"/><path d="M2 0.5L6.5 0.5L6.5 5" fill="none" stroke="#8a8a8a" stroke-width="0.8"/><path d="M2.5 4.5L5 2" stroke="#555" stroke-width="0.8"/></svg>
<svg style="left:630.5px;top:31.5px" width="8" height="7.5" viewBox="0 0 8 7.5"><rect x="0" y="0" width="8" height="7.5" rx="2" fill="#e2512e"/><path d="M2.3 2L5.7 5.5M5.7 2L2.3 5.5" stroke="#fff" stroke-width="1.1"/></svg>
<svg style="left:503px;top:43px" width="7" height="7" viewBox="0 0 7 7"><path d="M6.5 0.5L0.5 3.5L6.5 6.5Z" fill="#c4c4c4"/></svg>
<div class="a" style="left:512px;top:43px;width:8.5px;height:8px;background:#fff;border:1.3px solid #d04848"></div>
<div class="a" style="left:521.5px;top:41.75px;width:65px;height:9.5px;background:#fff;border:1px solid #2a2a2a"></div>
<div class="t" style="left:522.90px;top:46.54px;font-size:7.4px;transform:scaleX(0.795);color:#1a1a1a">Home</div>
<svg style="left:570px;top:43px" width="17" height="7" viewBox="0 0 17 7"><path d="M0.5 1L6 1M0.5 3.5L6 3.5M0.5 6L6 6" stroke="#222" stroke-width="1"/><path d="M7.5 1.5L12 1.5L9.75 6Z" fill="#111"/><path d="M13 0L13 7" stroke="#222" stroke-width="1"/><rect x="14.5" y="0.5" width="2.5" height="6" fill="#e6e6e6" stroke="#bbb" stroke-width="0.5"/></svg>
<div class="a" style="left:593.5px;top:42px;width:10px;height:9.5px;background:#b8b8b8"></div>
<svg style="left:594.5px;top:43px" width="8" height="7.5" viewBox="0 0 8 7.5"><g fill="#333"><rect x="0.5" y="0.5" width="2" height="1.5"/><rect x="3" y="0.5" width="2" height="1.5"/><rect x="5.5" y="0.5" width="2" height="1.5"/><rect x="0.5" y="3" width="2" height="1.5"/><rect x="3" y="3" width="2" height="1.5"/><rect x="5.5" y="3" width="2" height="1.5"/><rect x="0.5" y="5.5" width="2" height="1.5"/><rect x="3" y="5.5" width="2" height="1.5"/><rect x="5.5" y="5.5" width="2" height="1.5"/></g></svg>
<div class="a" style="left:604.5px;top:42px;width:1px;height:9px;background:#9a9a9a"></div>
<svg style="left:607px;top:42.5px" width="8" height="8" viewBox="0 0 8 8"><path d="M4 0L4 8M0 4L8 4" stroke="#222" stroke-width="1.3"/></svg>
<svg style="left:620px;top:44.5px" width="8" height="5" viewBox="0 0 8 5"><path d="M0.5 0.5L4 4L7.5 0.5" fill="none" stroke="#222" stroke-width="1.1"/></svg>
<div class="a" style="left:629px;top:41px;width:11px;height:53px;background:#f0f0f0"></div>
<svg style="left:631.5px;top:44px" width="6" height="4" viewBox="0 0 6 4"><path d="M0.5 3.5L3 1L5.5 3.5" fill="none" stroke="#555" stroke-width="1"/></svg>
<div class="a" style="left:630px;top:52.5px;width:9px;height:9.5px;background:#cdcdcd"></div>
<svg style="left:631.5px;top:77px" width="6" height="4" viewBox="0 0 6 4"><path d="M0.5 0.5L3 3L5.5 0.5" fill="none" stroke="#555" stroke-width="1"/></svg>
<div class="a" style="left:629px;top:41px;width:11px;height:11px;background:#f0f0f0"></div>
<svg style="left:632px;top:44px" width="6" height="4" viewBox="0 0 6 4"><path d="M0.5 3.5L3 1L5.5 3.5" fill="none" stroke="#444" stroke-width="1"/></svg>
<svg style="left:502px;top:53px;overflow:hidden" width="21.5" height="21.5" viewBox="0 0 21.5 21.5"><rect x="0" y="0" width="21.5" height="21.5" fill="#f2f2f2"/><rect x="0" y="0" width="21.5" height="5" fill="#8280ae"/><rect x="0" y="0" width="3.5" height="8" fill="#8a88b2"/><polygon points="3.5,6.5 6.5,3.2 21.5,3.2 16.5,6.5" fill="#a8a8a8"/><rect x="3.5" y="6.5" width="13.0" height="11.8" fill="#e4e4e0"/><polygon points="16.5,6.5 21.5,3.2 21.5,17.5 16.5,18.3" fill="#4a4a4a"/><rect x="0.0" y="8.5" width="2.2" height="2.2" fill="#0e0e0e"/><rect x="2.0" y="10.7" width="1.5" height="2.0" fill="#0e0e0e"/><rect x="0.0" y="12.7" width="2.2" height="2.2" fill="#0e0e0e"/><rect x="2.0" y="14.9" width="1.5" height="2.2" fill="#0e0e0e"/><rect x="0.0" y="17.0" width="2.5" height="2.0" fill="#0e0e0e"/><rect x="4.5" y="15.3" width="1.5" height="2.0" fill="#0e0e0e"/><rect x="2.2" y="16.3" width="1.5" height="1.5" fill="#0e0e0e"/><rect x="2.5" y="17.8" width="3.0" height="2.6" fill="#0e0e0e"/><rect x="6.5" y="19.1" width="4.0" height="2.4" fill="#0e0e0e"/><rect x="11.5" y="19.1" width="3.5" height="2.4" fill="#0e0e0e"/><rect x="17.0" y="18.3" width="3.0" height="2.6" fill="#0e0e0e"/><rect x="19.3" y="15.8" width="2.2" height="2.2" fill="#0e0e0e"/><rect x="17.3" y="13.3" width="2.0" height="2.2" fill="#0e0e0e"/><polygon points="17.5,17.3 20.5,14.3 20.5,18.3" fill="#f4f4f4"/><rect x="0.75" y="0.75" width="20.0" height="20.0" fill="none" stroke="#cf3a3a" stroke-width="1.5"/></svg>
<svg style="left:524px;top:53px;overflow:hidden" width="20" height="21.5" viewBox="0 0 20 21.5"><rect x="0" y="0" width="20" height="21.5" fill="#f2f2f2"/><rect x="0" y="0" width="20" height="5" fill="#8280ae"/><rect x="0" y="0" width="3.5" height="8" fill="#8a88b2"/><polygon points="3.5,6.5 6.5,3.2 20,3.2 15,6.5" fill="#a09e94"/><rect x="3.5" y="6.5" width="11.5" height="11.8" fill="#d2cfb2"/><polygon points="15,6.5 20,3.2 20,17.5 15,18.3" fill="#4a4a48"/><rect x="0.0" y="8.5" width="2.2" height="2.2" fill="#0e0e0e"/><rect x="2.0" y="10.7" width="1.5" height="2.0" fill="#0e0e0e"/><rect x="0.0" y="12.7" width="2.2" height="2.2" fill="#0e0e0e"/><rect x="2.0" y="14.9" width="1.5" height="2.2" fill="#0e0e0e"/><rect x="0.0" y="17.0" width="2.5" height="2.0" fill="#0e0e0e"/><rect x="4.5" y="15.3" width="1.5" height="2.0" fill="#0e0e0e"/><rect x="2.2" y="16.3" width="1.5" height="1.5" fill="#0e0e0e"/><rect x="2.5" y="17.8" width="3.0" height="2.6" fill="#0e0e0e"/><rect x="6.5" y="19.1" width="4.0" height="2.4" fill="#0e0e0e"/><rect x="11.5" y="19.1" width="3.5" height="2.4" fill="#0e0e0e"/><rect x="15.5" y="18.3" width="3.0" height="2.6" fill="#0e0e0e"/><rect x="17.8" y="15.8" width="2.2" height="2.2" fill="#0e0e0e"/><rect x="15.8" y="13.3" width="2.0" height="2.2" fill="#0e0e0e"/><polygon points="16,17.3 19,14.3 19,18.3" fill="#f4f4f4"/></svg>
<svg style="left:545px;top:53px;overflow:hidden" width="20" height="21.5" viewBox="0 0 20 21.5"><rect x="0" y="0" width="20" height="21.5" fill="#f2f2f2"/><rect x="0" y="0" width="20" height="5" fill="#8280ae"/><rect x="0" y="0" width="3.5" height="8" fill="#8a88b2"/><polygon points="3.5,6.5 6.5,3.2 20,3.2 15,6.5" fill="#9aa498"/><rect x="3.5" y="6.5" width="11.5" height="11.8" fill="#bfd2b5"/><polygon points="15,6.5 20,3.2 20,17.5 15,18.3" fill="#444a44"/><rect x="0.0" y="8.5" width="2.2" height="2.2" fill="#0e0e0e"/><rect x="2.0" y="10.7" width="1.5" height="2.0" fill="#0e0e0e"/><rect x="0.0" y="12.7" width="2.2" height="2.2" fill="#0e0e0e"/><rect x="2.0" y="14.9" width="1.5" height="2.2" fill="#0e0e0e"/><rect x="0.0" y="17.0" width="2.5" height="2.0" fill="#0e0e0e"/><rect x="4.5" y="15.3" width="1.5" height="2.0" fill="#0e0e0e"/><rect x="2.2" y="16.3" width="1.5" height="1.5" fill="#0e0e0e"/><rect x="2.5" y="17.8" width="3.0" height="2.6" fill="#0e0e0e"/><rect x="6.5" y="19.1" width="4.0" height="2.4" fill="#0e0e0e"/><rect x="11.5" y="19.1" width="3.5" height="2.4" fill="#0e0e0e"/><rect x="15.5" y="18.3" width="3.0" height="2.6" fill="#0e0e0e"/><rect x="17.8" y="15.8" width="2.2" height="2.2" fill="#0e0e0e"/><rect x="15.8" y="13.3" width="2.0" height="2.2" fill="#0e0e0e"/><polygon points="16,17.3 19,14.3 19,18.3" fill="#f4f4f4"/></svg>
<svg style="left:566px;top:53px;overflow:hidden" width="20" height="21.5" viewBox="0 0 20 21.5"><rect x="0" y="0" width="20" height="21.5" fill="#f2f2f2"/><rect x="0" y="0" width="20" height="5" fill="#8280ae"/><rect x="0" y="0" width="3.5" height="8" fill="#8a88b2"/><polygon points="3.5,6.5 6.5,3.2 20,3.2 15,6.5" fill="#98a6a2"/><rect x="3.5" y="6.5" width="11.5" height="11.8" fill="#b9d4c6"/><polygon points="15,6.5 20,3.2 20,17.5 15,18.3" fill="#444a48"/><rect x="0.0" y="8.5" width="2.2" height="2.2" fill="#0e0e0e"/><rect x="2.0" y="10.7" width="1.5" height="2.0" fill="#0e0e0e"/><rect x="0.0" y="12.7" width="2.2" height="2.2" fill="#0e0e0e"/><rect x="2.0" y="14.9" width="1.5" height="2.2" fill="#0e0e0e"/><rect x="0.0" y="17.0" width="2.5" height="2.0" fill="#0e0e0e"/><rect x="4.5" y="15.3" width="1.5" height="2.0" fill="#0e0e0e"/><rect x="2.2" y="16.3" width="1.5" height="1.5" fill="#0e0e0e"/><rect x="2.5" y="17.8" width="3.0" height="2.6" fill="#0e0e0e"/><rect x="6.5" y="19.1" width="4.0" height="2.4" fill="#0e0e0e"/><rect x="11.5" y="19.1" width="3.5" height="2.4" fill="#0e0e0e"/><rect x="15.5" y="18.3" width="3.0" height="2.6" fill="#0e0e0e"/><rect x="17.8" y="15.8" width="2.2" height="2.2" fill="#0e0e0e"/><rect x="15.8" y="13.3" width="2.0" height="2.2" fill="#0e0e0e"/><polygon points="16,17.3 19,14.3 19,18.3" fill="#f4f4f4"/></svg>
<svg style="left:587px;top:53px;overflow:hidden" width="20" height="21.5" viewBox="0 0 20 21.5"><rect x="0" y="0" width="20" height="21.5" fill="#f2f2f2"/><rect x="0" y="0" width="20" height="5" fill="#8280ae"/><rect x="0" y="0" width="3.5" height="8" fill="#8a88b2"/><polygon points="3.5,6.5 6.5,3.2 20,3.2 15,6.5" fill="#9ca4ac"/><rect x="3.5" y="6.5" width="11.5" height="11.8" fill="#bfcdd6"/><polygon points="15,6.5 20,3.2 20,17.5 15,18.3" fill="#44484c"/><rect x="0.0" y="8.5" width="2.2" height="2.2" fill="#0e0e0e"/><rect x="2.0" y="10.7" width="1.5" height="2.0" fill="#0e0e0e"/><rect x="0.0" y="12.7" width="2.2" height="2.2" fill="#0e0e0e"/><rect x="2.0" y="14.9" width="1.5" height="2.2" fill="#0e0e0e"/><rect x="0.0" y="17.0" width="2.5" height="2.0" fill="#0e0e0e"/><rect x="4.5" y="15.3" width="1.5" height="2.0" fill="#0e0e0e"/><rect x="2.2" y="16.3" width="1.5" height="1.5" fill="#0e0e0e"/><rect x="2.5" y="17.8" width="3.0" height="2.6" fill="#0e0e0e"/><rect x="6.5" y="19.1" width="4.0" height="2.4" fill="#0e0e0e"/><rect x="11.5" y="19.1" width="3.5" height="2.4" fill="#0e0e0e"/><rect x="15.5" y="18.3" width="3.0" height="2.6" fill="#0e0e0e"/><rect x="17.8" y="15.8" width="2.2" height="2.2" fill="#0e0e0e"/><rect x="15.8" y="13.3" width="2.0" height="2.2" fill="#0e0e0e"/><polygon points="16,17.3 19,14.3 19,18.3" fill="#f4f4f4"/></svg>
<svg style="left:608px;top:53px;overflow:hidden" width="20" height="21.5" viewBox="0 0 20 21.5"><rect x="0" y="0" width="20" height="21.5" fill="#f2f2f2"/><rect x="0" y="0" width="20" height="5" fill="#8280ae"/><rect x="0" y="0" width="3.5" height="8" fill="#8a88b2"/><polygon points="3.5,6.5 6.5,3.2 20,3.2 15,6.5" fill="#a4a2b4"/><rect x="3.5" y="6.5" width="11.5" height="11.8" fill="#c7c5dc"/><polygon points="15,6.5 20,3.2 20,17.5 15,18.3" fill="#48464c"/><rect x="0.0" y="8.5" width="2.2" height="2.2" fill="#0e0e0e"/><rect x="2.0" y="10.7" width="1.5" height="2.0" fill="#0e0e0e"/><rect x="0.0" y="12.7" width="2.2" height="2.2" fill="#0e0e0e"/><rect x="2.0" y="14.9" width="1.5" height="2.2" fill="#0e0e0e"/><rect x="0.0" y="17.0" width="2.5" height="2.0" fill="#0e0e0e"/><rect x="4.5" y="15.3" width="1.5" height="2.0" fill="#0e0e0e"/><rect x="2.2" y="16.3" width="1.5" height="1.5" fill="#0e0e0e"/><rect x="2.5" y="17.8" width="3.0" height="2.6" fill="#0e0e0e"/><rect x="6.5" y="19.1" width="4.0" height="2.4" fill="#0e0e0e"/><rect x="11.5" y="19.1" width="3.5" height="2.4" fill="#0e0e0e"/><rect x="15.5" y="18.3" width="3.0" height="2.6" fill="#0e0e0e"/><rect x="17.8" y="15.8" width="2.2" height="2.2" fill="#0e0e0e"/><rect x="15.8" y="13.3" width="2.0" height="2.2" fill="#0e0e0e"/><polygon points="16,17.3 19,14.3 19,18.3" fill="#f4f4f4"/></svg>
<svg style="left:502px;top:75.5px;overflow:hidden" width="21.5" height="19" viewBox="0 0 21.5 19"><rect x="0" y="0" width="21.5" height="19" fill="#f2f2f2"/><rect x="0" y="0" width="21.5" height="5" fill="#8280ae"/><rect x="0" y="0" width="3.5" height="8" fill="#8a88b2"/><polygon points="3.5,6.5 6.5,3.2 21.5,3.2 16.5,6.5" fill="#a69cae"/><rect x="3.5" y="6.5" width="13.0" height="9.3" fill="#cbbbd4"/><polygon points="16.5,6.5 21.5,3.2 21.5,15.0 16.5,15.8" fill="#48444c"/><rect x="0.0" y="8.5" width="2.2" height="2.2" fill="#0e0e0e"/><rect x="2.0" y="10.7" width="1.5" height="2.0" fill="#0e0e0e"/><rect x="0.0" y="12.7" width="2.2" height="2.2" fill="#0e0e0e"/><rect x="2.0" y="14.9" width="1.5" height="2.2" fill="#0e0e0e"/><rect x="0.0" y="17.0" width="2.5" height="2.0" fill="#0e0e0e"/><rect x="4.5" y="12.8" width="1.5" height="2.0" fill="#0e0e0e"/><rect x="2.2" y="13.8" width="1.5" height="1.5" fill="#0e0e0e"/><rect x="2.5" y="15.3" width="3.0" height="2.6" fill="#0e0e0e"/><rect x="6.5" y="16.6" width="4.0" height="2.4" fill="#0e0e0e"/><rect x="11.5" y="16.6" width="3.5" height="2.4" fill="#0e0e0e"/><rect x="17.0" y="15.8" width="3.0" height="2.6" fill="#0e0e0e"/><rect x="19.3" y="13.3" width="2.2" height="2.2" fill="#0e0e0e"/><rect x="17.3" y="10.8" width="2.0" height="2.2" fill="#0e0e0e"/><polygon points="17.5,14.8 20.5,11.8 20.5,15.8" fill="#f4f4f4"/></svg>
<svg style="left:524px;top:75.5px;overflow:hidden" width="20" height="19" viewBox="0 0 20 19"><rect x="0" y="0" width="20" height="19" fill="#f2f2f2"/><rect x="0" y="0" width="20" height="5" fill="#8280ae"/><rect x="0" y="0" width="3.5" height="8" fill="#8a88b2"/><polygon points="3.5,6.5 6.5,3.2 20,3.2 15,6.5" fill="#a89ca0"/><rect x="3.5" y="6.5" width="11.5" height="9.3" fill="#cfb9be"/><polygon points="15,6.5 20,3.2 20,15.0 15,15.8" fill="#4a4446"/><rect x="0.0" y="8.5" width="2.2" height="2.2" fill="#0e0e0e"/><rect x="2.0" y="10.7" width="1.5" height="2.0" fill="#0e0e0e"/><rect x="0.0" y="12.7" width="2.2" height="2.2" fill="#0e0e0e"/><rect x="2.0" y="14.9" width="1.5" height="2.2" fill="#0e0e0e"/><rect x="0.0" y="17.0" width="2.5" height="2.0" fill="#0e0e0e"/><rect x="4.5" y="12.8" width="1.5" height="2.0" fill="#0e0e0e"/><rect x="2.2" y="13.8" width="1.5" height="1.5" fill="#0e0e0e"/><rect x="2.5" y="15.3" width="3.0" height="2.6" fill="#0e0e0e"/><rect x="6.5" y="16.6" width="4.0" height="2.4" fill="#0e0e0e"/><rect x="11.5" y="16.6" width="3.5" height="2.4" fill="#0e0e0e"/><rect x="15.5" y="15.8" width="3.0" height="2.6" fill="#0e0e0e"/><rect x="17.8" y="13.3" width="2.2" height="2.2" fill="#0e0e0e"/><rect x="15.8" y="10.8" width="2.0" height="2.2" fill="#0e0e0e"/><polygon points="16,14.8 19,11.8 19,15.8" fill="#f4f4f4"/></svg>
<svg style="left:545px;top:75.5px;overflow:hidden" width="20" height="19" viewBox="0 0 20 19"><rect x="0" y="0" width="20" height="19" fill="#f2f2f2"/><rect x="0" y="0" width="20" height="5" fill="#8280ae"/><rect x="0" y="0" width="3.5" height="8" fill="#8a88b2"/><polygon points="3.5,6.5 6.5,3.2 20,3.2 15,6.5" fill="#a2a4a4"/><rect x="3.5" y="6.5" width="11.5" height="9.3" fill="#c8caca"/><polygon points="15,6.5 20,3.2 20,15.0 15,15.8" fill="#464848"/><rect x="0.0" y="8.5" width="2.2" height="2.2" fill="#0e0e0e"/><rect x="2.0" y="10.7" width="1.5" height="2.0" fill="#0e0e0e"/><rect x="0.0" y="12.7" width="2.2" height="2.2" fill="#0e0e0e"/><rect x="2.0" y="14.9" width="1.5" height="2.2" fill="#0e0e0e"/><rect x="0.0" y="17.0" width="2.5" height="2.0" fill="#0e0e0e"/><rect x="4.5" y="12.8" width="1.5" height="2.0" fill="#0e0e0e"/><rect x="2.2" y="13.8" width="1.5" height="1.5" fill="#0e0e0e"/><rect x="2.5" y="15.3" width="3.0" height="2.6" fill="#0e0e0e"/><rect x="6.5" y="16.6" width="4.0" height="2.4" fill="#0e0e0e"/><rect x="11.5" y="16.6" width="3.5" height="2.4" fill="#0e0e0e"/><rect x="15.5" y="15.8" width="3.0" height="2.6" fill="#0e0e0e"/><rect x="17.8" y="13.3" width="2.2" height="2.2" fill="#0e0e0e"/><rect x="15.8" y="10.8" width="2.0" height="2.2" fill="#0e0e0e"/><polygon points="16,14.8 19,11.8 19,15.8" fill="#f4f4f4"/></svg>
<svg style="left:566px;top:75.5px;overflow:hidden" width="20" height="19" viewBox="0 0 20 19"><rect x="0" y="0" width="20" height="19" fill="#f2f2f2"/><rect x="0" y="0" width="20" height="5" fill="#8280ae"/><rect x="0" y="0" width="3.5" height="8" fill="#8a88b2"/><polygon points="3.5,6.5 6.5,3.2 20,3.2 15,6.5" fill="#a09670"/><rect x="3.5" y="6.5" width="11.5" height="9.3" fill="#cdbd7e"/><polygon points="15,6.5 20,3.2 20,15.0 15,15.8" fill="#4a4636"/><rect x="0.0" y="8.5" width="2.2" height="2.2" fill="#0e0e0e"/><rect x="2.0" y="10.7" width="1.5" height="2.0" fill="#0e0e0e"/><rect x="0.0" y="12.7" width="2.2" height="2.2" fill="#0e0e0e"/><rect x="2.0" y="14.9" width="1.5" height="2.2" fill="#0e0e0e"/><rect x="0.0" y="17.0" width="2.5" height="2.0" fill="#0e0e0e"/><rect x="4.5" y="12.8" width="1.5" height="2.0" fill="#0e0e0e"/><rect x="2.2" y="13.8" width="1.5" height="1.5" fill="#0e0e0e"/><rect x="2.5" y="15.3" width="3.0" height="2.6" fill="#0e0e0e"/><rect x="6.5" y="16.6" width="4.0" height="2.4" fill="#0e0e0e"/><rect x="11.5" y="16.6" width="3.5" height="2.4" fill="#0e0e0e"/><rect x="15.5" y="15.8" width="3.0" height="2.6" fill="#0e0e0e"/><rect x="17.8" y="13.3" width="2.2" height="2.2" fill="#0e0e0e"/><rect x="15.8" y="10.8" width="2.0" height="2.2" fill="#0e0e0e"/><polygon points="16,14.8 19,11.8 19,15.8" fill="#f4f4f4"/></svg>
<svg style="left:587px;top:75.5px;overflow:hidden" width="20" height="19" viewBox="0 0 20 19"><rect x="0" y="0" width="20" height="19" fill="#f2f2f2"/><rect x="0" y="0" width="20" height="5" fill="#8280ae"/><rect x="0" y="0" width="3.5" height="8" fill="#8a88b2"/><polygon points="3.5,6.5 6.5,3.2 20,3.2 15,6.5" fill="#6e9664"/><rect x="3.5" y="6.5" width="11.5" height="9.3" fill="#7eb66e"/><polygon points="15,6.5 20,3.2 20,15.0 15,15.8" fill="#2e402a"/><rect x="0.0" y="8.5" width="2.2" height="2.2" fill="#0e0e0e"/><rect x="2.0" y="10.7" width="1.5" height="2.0" fill="#0e0e0e"/><rect x="0.0" y="12.7" width="2.2" height="2.2" fill="#0e0e0e"/><rect x="2.0" y="14.9" width="1.5" height="2.2" fill="#0e0e0e"/><rect x="0.0" y="17.0" width="2.5" height="2.0" fill="#0e0e0e"/><rect x="4.5" y="12.8" width="1.5" height="2.0" fill="#0e0e0e"/><rect x="2.2" y="13.8" width="1.5" height="1.5" fill="#0e0e0e"/><rect x="2.5" y="15.3" width="3.0" height="2.6" fill="#0e0e0e"/><rect x="6.5" y="16.6" width="4.0" height="2.4" fill="#0e0e0e"/><rect x="11.5" y="16.6" width="3.5" height="2.4" fill="#0e0e0e"/><rect x="15.5" y="15.8" width="3.0" height="2.6" fill="#0e0e0e"/><rect x="17.8" y="13.3" width="2.2" height="2.2" fill="#0e0e0e"/><rect x="15.8" y="10.8" width="2.0" height="2.2" fill="#0e0e0e"/><polygon points="16,14.8 19,11.8 19,15.8" fill="#f4f4f4"/></svg>
<svg style="left:608px;top:75.5px;overflow:hidden" width="20" height="19" viewBox="0 0 20 19"><rect x="0" y="0" width="20" height="19" fill="#f2f2f2"/><rect x="0" y="0" width="20" height="5" fill="#8280ae"/><rect x="0" y="0" width="3.5" height="8" fill="#8a88b2"/><polygon points="3.5,6.5 6.5,3.2 20,3.2 15,6.5" fill="#5c9a80"/><rect x="3.5" y="6.5" width="11.5" height="9.3" fill="#66bc94"/><polygon points="15,6.5 20,3.2 20,15.0 15,15.8" fill="#2a4036"/><rect x="0.0" y="8.5" width="2.2" height="2.2" fill="#0e0e0e"/><rect x="2.0" y="10.7" width="1.5" height="2.0" fill="#0e0e0e"/><rect x="0.0" y="12.7" width="2.2" height="2.2" fill="#0e0e0e"/><rect x="2.0" y="14.9" width="1.5" height="2.2" fill="#0e0e0e"/><rect x="0.0" y="17.0" width="2.5" height="2.0" fill="#0e0e0e"/><rect x="4.5" y="12.8" width="1.5" height="2.0" fill="#0e0e0e"/><rect x="2.2" y="13.8" width="1.5" height="1.5" fill="#0e0e0e"/><rect x="2.5" y="15.3" width="3.0" height="2.6" fill="#0e0e0e"/><rect x="6.5" y="16.6" width="4.0" height="2.4" fill="#0e0e0e"/><rect x="11.5" y="16.6" width="3.5" height="2.4" fill="#0e0e0e"/><rect x="15.5" y="15.8" width="3.0" height="2.6" fill="#0e0e0e"/><rect x="17.8" y="13.3" width="2.2" height="2.2" fill="#0e0e0e"/><rect x="15.8" y="10.8" width="2.0" height="2.2" fill="#0e0e0e"/><polygon points="16,14.8 19,11.8 19,15.8" fill="#f4f4f4"/></svg>
<div class="a" style="left:502px;top:94.5px;width:138px;height:10px;background:#d8d8d8"></div>
<svg style="left:503.5px;top:97.5px" width="6" height="5" viewBox="0 0 6 5"><path d="M0 0L6 0L3 4.5Z" fill="#8c8c8c"/></svg>
<div class="t" style="left:513.75px;top:100.34px;font-size:7.4px;transform:scaleX(0.907);color:#262626">Tool Options - Subdivision Grow Edge</div>
<svg style="left:622.5px;top:96.0px" width="7" height="7" viewBox="0 0 7 7"><rect x="0.5" y="1.5" width="5.5" height="5" fill="#e8e8e8" stroke="#8a8a8a" stroke-width="0.8"/><path d="M2 0.5L6.5 0.5L6.5 5" fill="none" stroke="#8a8a8a" stroke-width="0.8"/><path d="M2.5 4.5L5 2" stroke="#555" stroke-width="0.8"/></svg>
<svg style="left:630.5px;top:96.0px" width="8" height="7.5" viewBox="0 0 8 7.5"><rect x="0" y="0" width="8" height="7.5" rx="2" fill="#e2512e"/><path d="M2.3 2L5.7 5.5M5.7 2L2.3 5.5" stroke="#fff" stroke-width="1.1"/></svg>
<div class="t" style="left:502.00px;top:111.64px;font-size:7.4px;transform:scaleX(0.799);color:#262626">Distance</div>
<div class="a" style="left:530px;top:106.4px;width:46px;height:9.3px;background:#ffffff"></div>
<div class="t" style="left:533.75px;top:111.44px;font-size:7.4px;transform:scaleX(0.843);color:#262626">0,4800 m</div>
<div class="t" style="left:502.00px;top:122.04px;font-size:7.4px;transform:scaleX(0.793);color:#262626">Angle</div>
<div class="a" style="left:530px;top:116.8px;width:46px;height:8.7px;background:#ffffff"></div>
<div class="t" style="left:536.50px;top:121.24px;font-size:7.4px;transform:scaleX(0.777);color:#262626">0°</div>
<div class="a" style="left:580px;top:106px;width:7.5px;height:7.5px;background:#fff;border:1px solid #5a5a5a"></div>
<div class="t" style="left:589.00px;top:110.04px;font-size:7.4px;transform:scaleX(0.800);color:#262626">Lock</div>
<svg style="left:607px;top:105.5px" width="7" height="8" viewBox="0 0 7 8"><path d="M2 3.5L2 2.3Q2 0.5 3.5 0.5Q5 0.5 5 2.3L5 3.5" fill="none" stroke="#1e1e1e" stroke-width="0.9"/><rect x="0.8" y="3.3" width="5.4" height="4.2" fill="#1e1e1e"/><rect x="3.1" y="4.5" width="0.9" height="1.8" fill="#fff"/></svg>
<div class="a" style="left:580px;top:117px;width:7.5px;height:7.5px;background:#fff;border:1px solid #5a5a5a"></div>
<div class="t" style="left:589.00px;top:121.04px;font-size:7.4px;transform:scaleX(0.800);color:#262626">Lock</div>
<svg style="left:607px;top:116.5px" width="7" height="8" viewBox="0 0 7 8"><path d="M2 3.5L2 2.3Q2 0.5 3.5 0.5Q5 0.5 5 2.3L5 3.5" fill="none" stroke="#1e1e1e" stroke-width="0.9"/><rect x="0.8" y="3.3" width="5.4" height="4.2" fill="#1e1e1e"/><rect x="3.1" y="4.5" width="0.9" height="1.8" fill="#fff"/></svg>
<div class="a" style="left:502px;top:127.5px;width:6.5px;height:6.5px;background:#fff;border:1px solid #5a5a5a"></div>
<svg style="left:503px;top:128.5px" width="5.5" height="5" viewBox="0 0 5.5 5"><path d="M0.3 2.5L2 4.3L5.2 0.5" fill="none" stroke="#222" stroke-width="0.9"/></svg>
<div class="t" style="left:510.60px;top:130.69px;font-size:7.4px;transform:scaleX(0.810);color:#262626">Sequence</div>
<div class="a" style="left:502px;top:261px;width:138px;height:10px;background:#d8d8d8"></div>
<svg style="left:503.5px;top:264px" width="6" height="5" viewBox="0 0 6 5"><path d="M0 0L6 0L3 4.5Z" fill="#8c8c8c"/></svg>
<div class="t" style="left:513.75px;top:266.84px;font-size:7.4px;transform:scaleX(0.857);color:#262626">Objects</div>
<svg style="left:622.5px;top:262.5px" width="7" height="7" viewBox="0 0 7 7"><rect x="0.5" y="1.5" width="5.5" height="5" fill="#e8e8e8" stroke="#8a8a8a" stroke-width="0.8"/><path d="M2 0.5L6.5 0.5L6.5 5" fill="none" stroke="#8a8a8a" stroke-width="0.8"/><path d="M2.5 4.5L5 2" stroke="#555" stroke-width="0.8"/></svg>
<svg style="left:630.5px;top:262.5px" width="8" height="7.5" viewBox="0 0 8 7.5"><rect x="0" y="0" width="8" height="7.5" rx="2" fill="#e2512e"/><path d="M2.3 2L5.7 5.5M5.7 2L2.3 5.5" stroke="#fff" stroke-width="1.1"/></svg>
<div class="a" style="left:502px;top:271.5px;width:128px;height:12px;background:#f9f9f9"></div>
<div class="a" style="left:502px;top:283.5px;width:128px;height:1px;background:#d4d4d4"></div>
<div class="a" style="left:502px;top:272.5px;width:9px;height:10px;background:#c6c6c6"></div>
<svg style="left:503px;top:274.0px" width="7" height="7" viewBox="0 0 7 7"><path d="M0.8 3.8L2.6 6.5L6.5 0.5" fill="none" stroke="#262626" stroke-width="1.8"/></svg>
<div class="a" style="left:512.5px;top:272.5px;width:9.5px;height:10px;background:#dedede"></div>
<svg style="left:513px;top:274.5px" width="9" height="7" viewBox="0 0 9 7"><ellipse cx="4.5" cy="3.5" rx="4" ry="2.9" fill="#fff" stroke="#2a2a2a" stroke-width="0.85" transform="rotate(-8 4.5 3.5)"/><circle cx="4.2" cy="2.9" r="1.2" fill="#2a2a2a"/></svg>
<div class="a" style="left:524px;top:272.5px;width:9.5px;height:10px;background:#d2d2d2"></div>
<svg style="left:525.5px;top:273.5px" width="7" height="8" viewBox="0 0 7 8"><path d="M2 3.5L2 2.3Q2 0.5 3.5 0.5Q5 0.5 5 2.3L5 3.5" fill="none" stroke="#1e1e1e" stroke-width="0.9"/><rect x="0.8" y="3.3" width="5.4" height="4.2" fill="#1e1e1e"/><rect x="3.1" y="4.5" width="0.9" height="1.8" fill="#fff"/></svg>
<svg style="left:536px;top:273.5px" width="8" height="8" viewBox="0 0 8 8"><path d="M4 0.3L4 7.7M0.3 4L7.7 4" stroke="#1e1e1e" stroke-width="1.3"/><circle cx="4" cy="4" r="1.8" fill="#1e1e1e"/><circle cx="4" cy="4" r="0.9" fill="#e8e8e8"/><path d="M1 1L1.8 1.8M7 1L6.2 1.8M1 7L1.8 6.2M7 7L6.2 6.2" stroke="#555" stroke-width="0.8"/></svg>
<div class="t" style="left:549.20px;top:278.94px;font-size:7.4px;transform:scaleX(0.831);color:#262626">Name</div>
<svg style="left:607px;top:273.5px" width="8" height="8" viewBox="0 0 8 8"><path d="M4 0L4 8M0 4L8 4" stroke="#222" stroke-width="1.3"/></svg>
<div class="a" style="left:618.5px;top:272.5px;width:11px;height:10px;background:#f2f2f2"></div>
<svg style="left:620px;top:275.0px" width="8" height="5" viewBox="0 0 8 5"><path d="M0.5 0.5L4 4L7.5 0.5" fill="none" stroke="#222" stroke-width="1.1"/></svg>
<div class="a" style="left:502px;top:284.4px;width:128px;height:11px;background:#e7eef8"></div>
<div class="a" style="left:502px;top:295.4px;width:128px;height:11px;background:#ffffff"></div>
<div class="a" style="left:502px;top:306.4px;width:128px;height:11px;background:#e7eef8"></div>
<div class="a" style="left:502px;top:317.4px;width:128px;height:11px;background:#ffffff"></div>
<div class="a" style="left:502px;top:328.4px;width:128px;height:11.5px;background:#e7eef8"></div>
<svg style="left:513px;top:286.7px" width="9" height="7" viewBox="0 0 9 7"><ellipse cx="4.5" cy="3.5" rx="4" ry="2.9" fill="#fff" stroke="#2a2a2a" stroke-width="0.85" transform="rotate(-8 4.5 3.5)"/><circle cx="4.2" cy="2.9" r="1.2" fill="#2a2a2a"/></svg>
<svg style="left:536px;top:285.9px" width="8" height="8" viewBox="0 0 8 8"><path d="M4 0.3L4 7.7M0.3 4L7.7 4" stroke="#1e1e1e" stroke-width="1.3"/><circle cx="4" cy="4" r="1.8" fill="#1e1e1e"/><circle cx="4" cy="4" r="0.9" fill="#e8e8e8"/><path d="M1 1L1.8 1.8M7 1L6.2 1.8M1 7L1.8 6.2M7 7L6.2 6.2" stroke="#555" stroke-width="0.8"/></svg>
<div class="t" style="left:557.00px;top:289.84px;font-size:7.4px;transform:scaleX(0.853);color:#1e1e1e">Object 1</div>
<svg style="left:513px;top:297.7px" width="9" height="7" viewBox="0 0 9 7"><ellipse cx="4.5" cy="3.5" rx="4" ry="2.9" fill="#fff" stroke="#2a2a2a" stroke-width="0.85" transform="rotate(-8 4.5 3.5)"/><circle cx="4.2" cy="2.9" r="1.2" fill="#2a2a2a"/></svg>
<svg style="left:536px;top:296.9px" width="8" height="8" viewBox="0 0 8 8"><path d="M4 0.3L4 7.7M0.3 4L7.7 4" stroke="#1e1e1e" stroke-width="1.3"/><circle cx="4" cy="4" r="1.8" fill="#1e1e1e"/><circle cx="4" cy="4" r="0.9" fill="#e8e8e8"/><path d="M1 1L1.8 1.8M7 1L6.2 1.8M1 7L1.8 6.2M7 7L6.2 6.2" stroke="#555" stroke-width="0.8"/></svg>
<div class="t" style="left:557.00px;top:300.84px;font-size:7.4px;transform:scaleX(0.853);color:#1e1e1e">Object 2</div>
<div class="a" style="left:630px;top:271.5px;width:10px;height:68px;background:#f0f0f0"></div>
<svg style="left:632.5px;top:274.5px" width="6" height="4" viewBox="0 0 6 4"><path d="M0.5 3.5L3 1L5.5 3.5" fill="none" stroke="#555" stroke-width="1"/></svg>
<div class="a" style="left:631px;top:282px;width:8px;height:8.5px;background:#cdcdcd"></div>
<svg style="left:632.5px;top:322px" width="6" height="4" viewBox="0 0 6 4"><path d="M0.5 0.5L3 3L5.5 0.5" fill="none" stroke="#555" stroke-width="1"/></svg>
<svg style="left:634px;top:330px" width="5" height="8" viewBox="0 0 5 8"><g fill="#c8c8c8"><rect x="3" y="1" width="1" height="1"/><rect x="3" y="4" width="1" height="1"/><rect x="0" y="4" width="1" height="1"/><rect x="3" y="7" width="1" height="1"/><rect x="0" y="7" width="1" height="1"/></g></svg>
<div class="a" style="left:502px;top:340px;width:138px;height:9.8px;background:#d8d8d8"></div>
<svg style="left:503.5px;top:343px" width="6" height="5" viewBox="0 0 6 5"><path d="M0 0L6 0L3 4.5Z" fill="#8c8c8c"/></svg>
<div class="t" style="left:513.75px;top:345.84px;font-size:7.4px;transform:scaleX(0.788);color:#262626">Layers</div>
<svg style="left:622.5px;top:341.5px" width="7" height="7" viewBox="0 0 7 7"><rect x="0.5" y="1.5" width="5.5" height="5" fill="#e8e8e8" stroke="#8a8a8a" stroke-width="0.8"/><path d="M2 0.5L6.5 0.5L6.5 5" fill="none" stroke="#8a8a8a" stroke-width="0.8"/><path d="M2.5 4.5L5 2" stroke="#555" stroke-width="0.8"/></svg>
<svg style="left:630.5px;top:341.5px" width="8" height="7.5" viewBox="0 0 8 7.5"><rect x="0" y="0" width="8" height="7.5" rx="2" fill="#e2512e"/><path d="M2.3 2L5.7 5.5M5.7 2L2.3 5.5" stroke="#fff" stroke-width="1.1"/></svg>
<div class="a" style="left:502px;top:349.6px;width:128px;height:12px;background:#f9f9f9"></div>
<div class="a" style="left:502px;top:361.6px;width:128px;height:1px;background:#d4d4d4"></div>
<div class="a" style="left:502px;top:350.6px;width:9px;height:10px;background:#c6c6c6"></div>
<svg style="left:503.5px;top:352.6px" width="6" height="6" viewBox="0 0 6 6"><circle cx="3" cy="3" r="2.4" fill="#888" stroke="#444" stroke-width="0.8"/></svg>
<div class="a" style="left:512.5px;top:350.6px;width:9.5px;height:10px;background:#dedede"></div>
<svg style="left:513px;top:352.6px" width="9" height="7" viewBox="0 0 9 7"><ellipse cx="4.5" cy="3.5" rx="4" ry="2.9" fill="#fff" stroke="#2a2a2a" stroke-width="0.85" transform="rotate(-8 4.5 3.5)"/><circle cx="4.2" cy="2.9" r="1.2" fill="#2a2a2a"/></svg>
<div class="a" style="left:524px;top:350.6px;width:9.5px;height:10px;background:#d2d2d2"></div>
<svg style="left:525.5px;top:351.6px" width="7" height="8" viewBox="0 0 7 8"><path d="M2 3.5L2 2.3Q2 0.5 3.5 0.5Q5 0.5 5 2.3L5 3.5" fill="none" stroke="#1e1e1e" stroke-width="0.9"/><rect x="0.8" y="3.3" width="5.4" height="4.2" fill="#1e1e1e"/><rect x="3.1" y="4.5" width="0.9" height="1.8" fill="#fff"/></svg>
<svg style="left:536px;top:351.6px" width="8" height="8" viewBox="0 0 8 8"><path d="M4 0.3L4 7.7M0.3 4L7.7 4" stroke="#1e1e1e" stroke-width="1.3"/><circle cx="4" cy="4" r="1.8" fill="#1e1e1e"/><circle cx="4" cy="4" r="0.9" fill="#e8e8e8"/><path d="M1 1L1.8 1.8M7 1L6.2 1.8M1 7L1.8 6.2M7 7L6.2 6.2" stroke="#555" stroke-width="0.8"/></svg>
<div class="t" style="left:549.20px;top:357.04px;font-size:7.4px;transform:scaleX(0.831);color:#262626">Name</div>
<svg style="left:607px;top:351.6px" width="8" height="8" viewBox="0 0 8 8"><path d="M4 0L4 8M0 4L8 4" stroke="#222" stroke-width="1.3"/></svg>
<div class="a" style="left:618.5px;top:350.6px;width:11px;height:10px;background:#f2f2f2"></div>
<svg style="left:620px;top:353.1px" width="8" height="5" viewBox="0 0 8 5"><path d="M0.5 0.5L4 4L7.5 0.5" fill="none" stroke="#222" stroke-width="1.1"/></svg>
<div class="a" style="left:502px;top:362.6px;width:128px;height:11px;background:#e7eef8"></div>
<div class="a" style="left:502px;top:373.6px;width:128px;height:11px;background:#ffffff"></div>
<div class="a" style="left:502px;top:384.6px;width:128px;height:11px;background:#e7eef8"></div>
<div class="a" style="left:502px;top:395.6px;width:128px;height:3.3999999999999773px;background:#ffffff"></div>
<svg style="left:504.5px;top:364.5px" width="6" height="6" viewBox="0 0 6 6"><circle cx="3" cy="3" r="1.9" fill="#b02a40" stroke="#5a1a20" stroke-width="0.6"/></svg>
<svg style="left:513px;top:364.8px" width="9" height="7" viewBox="0 0 9 7"><ellipse cx="4.5" cy="3.5" rx="4" ry="2.9" fill="#fff" stroke="#2a2a2a" stroke-width="0.85" transform="rotate(-8 4.5 3.5)"/><circle cx="4.2" cy="2.9" r="1.2" fill="#2a2a2a"/></svg>
<svg style="left:536px;top:364px" width="8" height="8" viewBox="0 0 8 8"><path d="M4 0.3L4 7.7M0.3 4L7.7 4" stroke="#1e1e1e" stroke-width="1.3"/><circle cx="4" cy="4" r="1.8" fill="#1e1e1e"/><circle cx="4" cy="4" r="0.9" fill="#e8e8e8"/><path d="M1 1L1.8 1.8M7 1L6.2 1.8M1 7L1.8 6.2M7 7L6.2 6.2" stroke="#555" stroke-width="0.8"/></svg>
<div class="t" style="left:556.50px;top:367.64px;font-size:7.4px;transform:scaleX(0.770);color:#1e1e1e">Layer 1</div>
<div class="a" style="left:630px;top:349.6px;width:10px;height:49.4px;background:#f0f0f0"></div>
<svg style="left:632.5px;top:352.6px" width="6" height="4" viewBox="0 0 6 4"><path d="M0.5 3.5L3 1L5.5 3.5" fill="none" stroke="#555" stroke-width="1"/></svg>
<div class="a" style="left:631px;top:360px;width:8px;height:9px;background:#cdcdcd"></div>
<div class="a" style="left:0px;top:399.3px;width:640px;height:1.3px;background:#dcecf8"></div>
<div class="a" style="left:0px;top:400.6px;width:640px;height:1.4px;background:#7a9ab6"></div>
<svg style="left:12px;top:399.5px" width="10" height="3" viewBox="0 0 10 3"><ellipse cx="5" cy="3" rx="4" ry="2.5" fill="#2a3a58"/></svg>
<svg style="left:33px;top:399.5px" width="12" height="3" viewBox="0 0 12 3"><ellipse cx="6" cy="3" rx="5" ry="2.2" fill="#5a6a7a"/></svg>
</body></html>
